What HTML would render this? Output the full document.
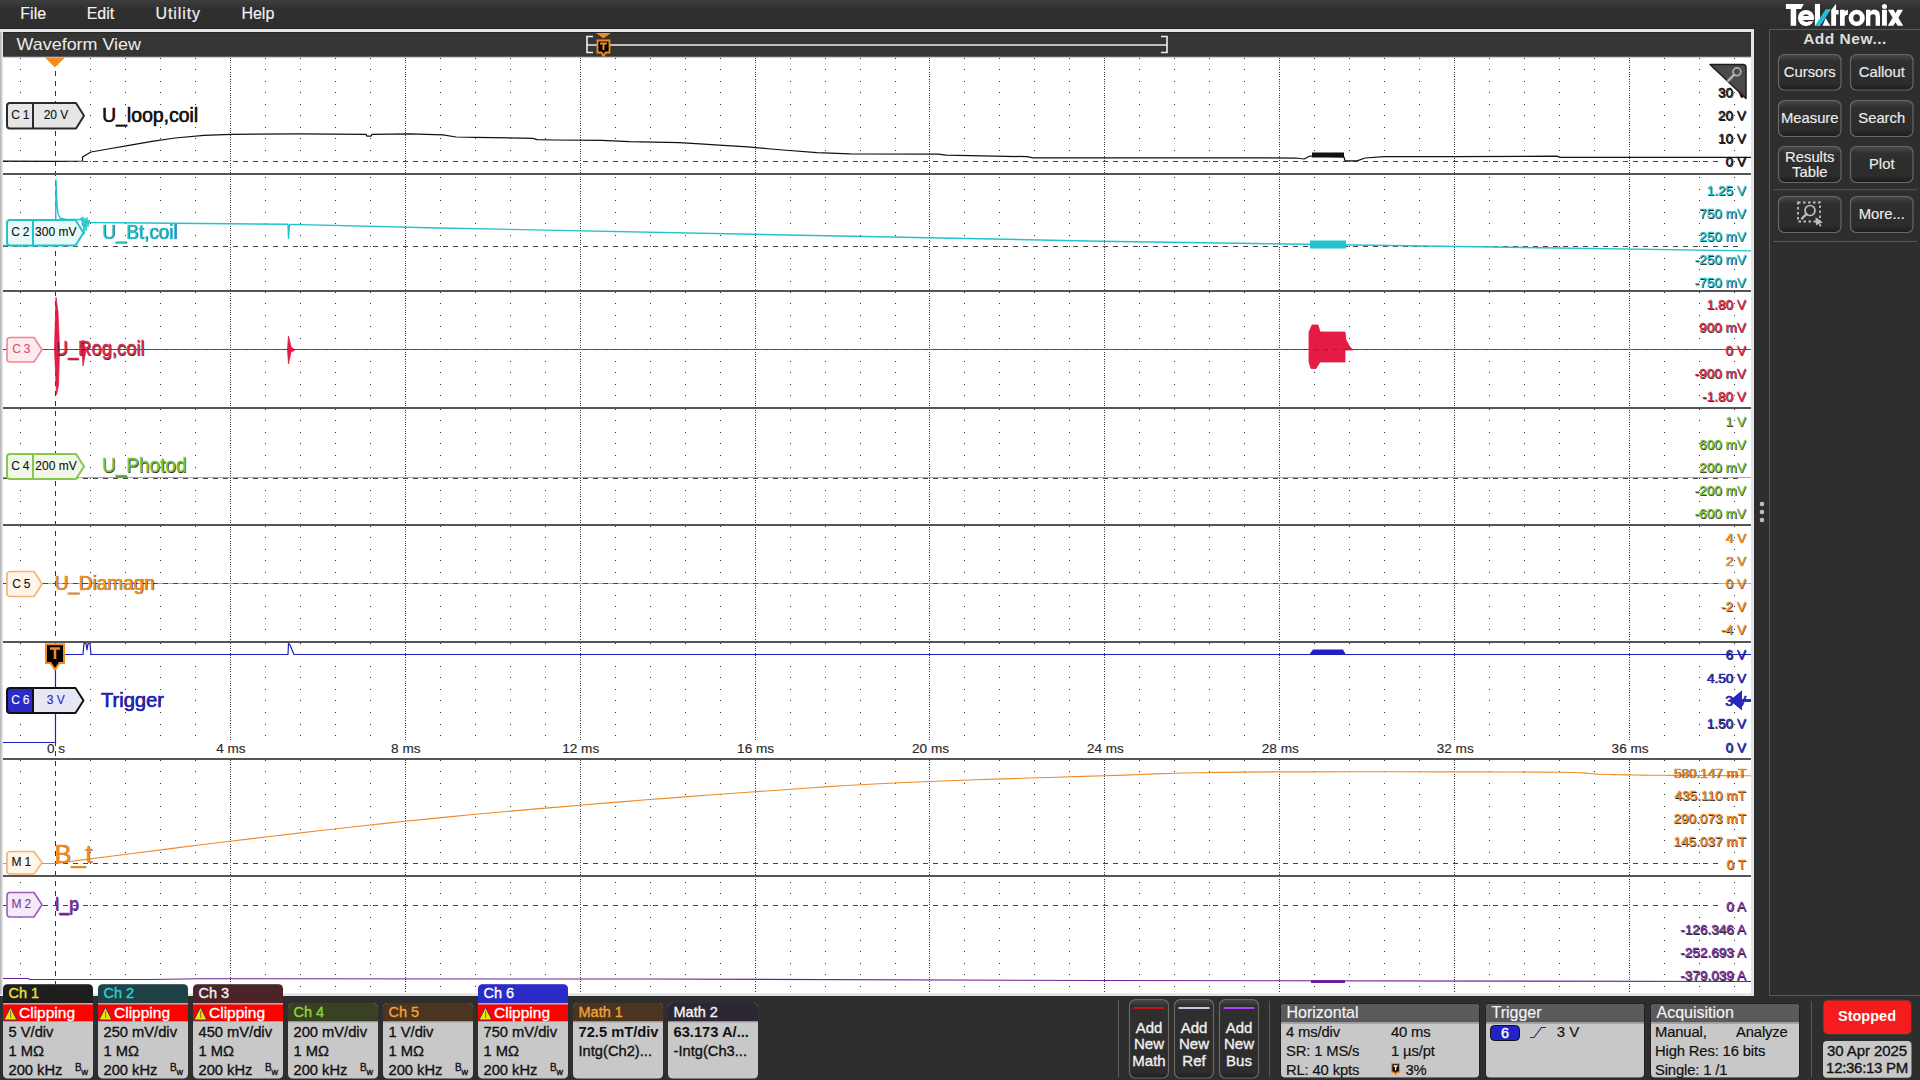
<!DOCTYPE html>
<html><head><meta charset="utf-8"><title>Tektronix Waveform View</title>
<style>html,body{margin:0;padding:0;background:#2e2e2e;width:1920px;height:1080px;overflow:hidden}svg{display:block}text{font-family:"Liberation Sans",sans-serif}</style>
</head><body>
<svg width="1920" height="1080" viewBox="0 0 1920 1080">
<defs>
<linearGradient id="gmenu" x1="0" y1="0" x2="0" y2="29" gradientUnits="userSpaceOnUse"><stop offset="0" stop-color="#3e3e3e"/><stop offset="0.33" stop-color="#2f2f2f"/><stop offset="1" stop-color="#2e2e2e"/></linearGradient>
<linearGradient id="gbtn" x1="0" y1="0" x2="0" y2="1"><stop offset="0" stop-color="#484a4b"/><stop offset="0.2" stop-color="#2f2f2f"/><stop offset="0.82" stop-color="#2c2c2c"/><stop offset="1" stop-color="#1c1c1c"/></linearGradient>
<linearGradient id="gbtn2" x1="0" y1="0" x2="0" y2="1"><stop offset="0" stop-color="#484a4b"/><stop offset="0.08" stop-color="#2f2f2f"/><stop offset="0.93" stop-color="#2c2c2c"/><stop offset="1" stop-color="#1c1c1c"/></linearGradient>
</defs>
<rect x="0" y="0" width="1920" height="1080" fill="#2e2e2e"/>
<rect x="0" y="0" width="1920" height="29" fill="url(#gmenu)"/>
<rect x="0" y="28" width="1754" height="1" fill="#262626"/>
<text x="20.3" y="19" font-size="16" fill="#f2f2f2" stroke="#f2f2f2" stroke-width="0.15" >File</text>
<text x="86.7" y="19" font-size="16" fill="#f2f2f2" stroke="#f2f2f2" stroke-width="0.15" >Edit</text>
<text x="241.4" y="19" font-size="16" fill="#f2f2f2" stroke="#f2f2f2" stroke-width="0.15" >Help</text>
<text x="155.5" y="19" font-size="16" fill="#f2f2f2" stroke="#f2f2f2" stroke-width="0.15" textLength="44.5" lengthAdjust="spacing">Utility</text>
<path d="M1785.9 4.05H1803.8L1801 9H1796.2V25.7H1790.7V9H1785.9Z" fill="#ffffff"/>
<path d="M1814.9 3.9H1820V25.7H1814.9Z" fill="#ffffff"/>
<path d="M1822.6 25.7H1830.3L1825.6 17.9Z" fill="#ffffff"/>
<path d="M1831.2 25.7V9.9L1835.6 4.2H1836.1V9.9H1838.6V14.5H1836.1V25.7Z" fill="#ffffff"/>
<path d="M1840 25.7V9.8H1844.7V11.4Q1845.9 9.8 1847.9 9.8V14.7Q1844.7 14.7 1844.7 17.6V25.7Z" fill="#ffffff"/>
<path d="M1866 25.7V9.8H1870.4V11.4Q1872 9.6 1874.3 9.6Q1880 9.8 1880 16.2V25.7H1875.6V16.6Q1875.6 14.3 1873 14.3Q1870.4 14.3 1870.4 16.6V25.7Z" fill="#ffffff"/>
<path d="M1882 9.8H1886.9V25.7H1882Z" fill="#ffffff"/>
<path d="M1888 9.8H1893.6L1895.5 13.2L1897.4 9.8H1903L1898.4 17.8L1903.2 25.7H1897.6L1895.5 22.3L1893.4 25.7H1887.8L1892.6 17.8Z" fill="#ffffff"/>
<circle cx="1806" cy="18" r="8.1" fill="#ffffff"/>
<path d="M1802.8 15.9Q1806 12.6 1809.2 15.9Z" fill="#2e2e2e"/>
<path d="M1802.8 20.1H1814.5V21.3H1808.8Q1806 23.4 1802.8 20.1Z" fill="#2e2e2e"/>
<circle cx="1856.7" cy="17.9" r="8.1" fill="#ffffff"/>
<ellipse cx="1856.6" cy="17.9" rx="3.3" ry="3.7" fill="#2e2e2e"/>
<circle cx="1884.45" cy="6.45" r="2.5" fill="#ffffff"/>
<path d="M1814.9 25.7H1820.1L1831 9.2H1825.7Z" fill="#1dc0e2"/>
<rect x="0" y="29" width="1754" height="967" fill="#e4e4e6"/><rect x="0" y="32" width="1.5" height="962" fill="#b8b9bb"/>
<rect x="3" y="32" width="1748" height="24" fill="#353533"/><rect x="3" y="32" width="1748" height="1" fill="#262626"/>
<rect x="3" y="56" width="1748" height="1.5" fill="#5a5d61"/>
<rect x="3" y="57.5" width="1748" height="935.8" fill="#ffffff"/>
<text x="16.5" y="50" font-size="17" fill="#ececec" textLength="124.5" lengthAdjust="spacingAndGlyphs">Waveform View</text>
<rect x="587" y="44" width="580" height="2" fill="#bdbdbd"/>
<path d="M593 36.5H587V52.5H593" fill="none" stroke="#f0f0f0" stroke-width="1.6"/>
<path d="M1161 36.5H1167V52.5H1161" fill="none" stroke="#f0f0f0" stroke-width="1.6"/>
<polygon points="595.8,33 611,33 603.4,38.3" fill="#f58a1f"/>
<path d="M597.5 40.5H609.5V52.5H605.5L603.5 56L601.5 52.5H597.5Z" fill="#000" stroke="#f58a1f" stroke-width="1.8"/>
<path d="M600 43.5H607M603.5 43.5V50" stroke="#f58a1f" stroke-width="2"/>
<path d="M20 58h1v1h-1zM90 58h1v1h-1zM125 58h1v1h-1zM160 58h1v1h-1zM195 58h1v1h-1zM265 58h1v1h-1zM300 58h1v1h-1zM335 58h1v1h-1zM370 58h1v1h-1zM440 58h1v1h-1zM475 58h1v1h-1zM510 58h1v1h-1zM545 58h1v1h-1zM615 58h1v1h-1zM650 58h1v1h-1zM685 58h1v1h-1zM720 58h1v1h-1zM790 58h1v1h-1zM825 58h1v1h-1zM860 58h1v1h-1zM895 58h1v1h-1zM964 58h1v1h-1zM999 58h1v1h-1zM1034 58h1v1h-1zM1069 58h1v1h-1zM1139 58h1v1h-1zM1174 58h1v1h-1zM1209 58h1v1h-1zM1244 58h1v1h-1zM1314 58h1v1h-1zM1349 58h1v1h-1zM1384 58h1v1h-1zM1419 58h1v1h-1zM1489 58h1v1h-1zM1524 58h1v1h-1zM1559 58h1v1h-1zM1594 58h1v1h-1zM1664 58h1v1h-1zM1699 58h1v1h-1zM1734 58h1v1h-1zM20 69h1v1h-1zM90 69h1v1h-1zM125 69h1v1h-1zM160 69h1v1h-1zM195 69h1v1h-1zM265 69h1v1h-1zM300 69h1v1h-1zM335 69h1v1h-1zM370 69h1v1h-1zM440 69h1v1h-1zM475 69h1v1h-1zM510 69h1v1h-1zM545 69h1v1h-1zM615 69h1v1h-1zM650 69h1v1h-1zM685 69h1v1h-1zM720 69h1v1h-1zM790 69h1v1h-1zM825 69h1v1h-1zM860 69h1v1h-1zM895 69h1v1h-1zM964 69h1v1h-1zM999 69h1v1h-1zM1034 69h1v1h-1zM1069 69h1v1h-1zM1139 69h1v1h-1zM1174 69h1v1h-1zM1209 69h1v1h-1zM1244 69h1v1h-1zM1314 69h1v1h-1zM1349 69h1v1h-1zM1384 69h1v1h-1zM1419 69h1v1h-1zM1489 69h1v1h-1zM1524 69h1v1h-1zM1559 69h1v1h-1zM1594 69h1v1h-1zM1664 69h1v1h-1zM1699 69h1v1h-1zM1734 69h1v1h-1zM20 81h1v1h-1zM90 81h1v1h-1zM125 81h1v1h-1zM160 81h1v1h-1zM195 81h1v1h-1zM265 81h1v1h-1zM300 81h1v1h-1zM335 81h1v1h-1zM370 81h1v1h-1zM440 81h1v1h-1zM475 81h1v1h-1zM510 81h1v1h-1zM545 81h1v1h-1zM615 81h1v1h-1zM650 81h1v1h-1zM685 81h1v1h-1zM720 81h1v1h-1zM790 81h1v1h-1zM825 81h1v1h-1zM860 81h1v1h-1zM895 81h1v1h-1zM964 81h1v1h-1zM999 81h1v1h-1zM1034 81h1v1h-1zM1069 81h1v1h-1zM1139 81h1v1h-1zM1174 81h1v1h-1zM1209 81h1v1h-1zM1244 81h1v1h-1zM1314 81h1v1h-1zM1349 81h1v1h-1zM1384 81h1v1h-1zM1419 81h1v1h-1zM1489 81h1v1h-1zM1524 81h1v1h-1zM1559 81h1v1h-1zM1594 81h1v1h-1zM1664 81h1v1h-1zM1699 81h1v1h-1zM1734 81h1v1h-1zM20 92h1v1h-1zM90 92h1v1h-1zM125 92h1v1h-1zM160 92h1v1h-1zM195 92h1v1h-1zM265 92h1v1h-1zM300 92h1v1h-1zM335 92h1v1h-1zM370 92h1v1h-1zM440 92h1v1h-1zM475 92h1v1h-1zM510 92h1v1h-1zM545 92h1v1h-1zM615 92h1v1h-1zM650 92h1v1h-1zM685 92h1v1h-1zM720 92h1v1h-1zM790 92h1v1h-1zM825 92h1v1h-1zM860 92h1v1h-1zM895 92h1v1h-1zM964 92h1v1h-1zM999 92h1v1h-1zM1034 92h1v1h-1zM1069 92h1v1h-1zM1139 92h1v1h-1zM1174 92h1v1h-1zM1209 92h1v1h-1zM1244 92h1v1h-1zM1314 92h1v1h-1zM1349 92h1v1h-1zM1384 92h1v1h-1zM1419 92h1v1h-1zM1489 92h1v1h-1zM1524 92h1v1h-1zM1559 92h1v1h-1zM1594 92h1v1h-1zM1664 92h1v1h-1zM1699 92h1v1h-1zM1734 92h1v1h-1zM20 104h1v1h-1zM90 104h1v1h-1zM125 104h1v1h-1zM160 104h1v1h-1zM195 104h1v1h-1zM265 104h1v1h-1zM300 104h1v1h-1zM335 104h1v1h-1zM370 104h1v1h-1zM440 104h1v1h-1zM475 104h1v1h-1zM510 104h1v1h-1zM545 104h1v1h-1zM615 104h1v1h-1zM650 104h1v1h-1zM685 104h1v1h-1zM720 104h1v1h-1zM790 104h1v1h-1zM825 104h1v1h-1zM860 104h1v1h-1zM895 104h1v1h-1zM964 104h1v1h-1zM999 104h1v1h-1zM1034 104h1v1h-1zM1069 104h1v1h-1zM1139 104h1v1h-1zM1174 104h1v1h-1zM1209 104h1v1h-1zM1244 104h1v1h-1zM1314 104h1v1h-1zM1349 104h1v1h-1zM1384 104h1v1h-1zM1419 104h1v1h-1zM1489 104h1v1h-1zM1524 104h1v1h-1zM1559 104h1v1h-1zM1594 104h1v1h-1zM1664 104h1v1h-1zM1699 104h1v1h-1zM1734 104h1v1h-1zM20 115h1v1h-1zM90 115h1v1h-1zM125 115h1v1h-1zM160 115h1v1h-1zM195 115h1v1h-1zM265 115h1v1h-1zM300 115h1v1h-1zM335 115h1v1h-1zM370 115h1v1h-1zM440 115h1v1h-1zM475 115h1v1h-1zM510 115h1v1h-1zM545 115h1v1h-1zM615 115h1v1h-1zM650 115h1v1h-1zM685 115h1v1h-1zM720 115h1v1h-1zM790 115h1v1h-1zM825 115h1v1h-1zM860 115h1v1h-1zM895 115h1v1h-1zM964 115h1v1h-1zM999 115h1v1h-1zM1034 115h1v1h-1zM1069 115h1v1h-1zM1139 115h1v1h-1zM1174 115h1v1h-1zM1209 115h1v1h-1zM1244 115h1v1h-1zM1314 115h1v1h-1zM1349 115h1v1h-1zM1384 115h1v1h-1zM1419 115h1v1h-1zM1489 115h1v1h-1zM1524 115h1v1h-1zM1559 115h1v1h-1zM1594 115h1v1h-1zM1664 115h1v1h-1zM1699 115h1v1h-1zM1734 115h1v1h-1zM20 127h1v1h-1zM90 127h1v1h-1zM125 127h1v1h-1zM160 127h1v1h-1zM195 127h1v1h-1zM265 127h1v1h-1zM300 127h1v1h-1zM335 127h1v1h-1zM370 127h1v1h-1zM440 127h1v1h-1zM475 127h1v1h-1zM510 127h1v1h-1zM545 127h1v1h-1zM615 127h1v1h-1zM650 127h1v1h-1zM685 127h1v1h-1zM720 127h1v1h-1zM790 127h1v1h-1zM825 127h1v1h-1zM860 127h1v1h-1zM895 127h1v1h-1zM964 127h1v1h-1zM999 127h1v1h-1zM1034 127h1v1h-1zM1069 127h1v1h-1zM1139 127h1v1h-1zM1174 127h1v1h-1zM1209 127h1v1h-1zM1244 127h1v1h-1zM1314 127h1v1h-1zM1349 127h1v1h-1zM1384 127h1v1h-1zM1419 127h1v1h-1zM1489 127h1v1h-1zM1524 127h1v1h-1zM1559 127h1v1h-1zM1594 127h1v1h-1zM1664 127h1v1h-1zM1699 127h1v1h-1zM1734 127h1v1h-1zM20 138h1v1h-1zM90 138h1v1h-1zM125 138h1v1h-1zM160 138h1v1h-1zM195 138h1v1h-1zM265 138h1v1h-1zM300 138h1v1h-1zM335 138h1v1h-1zM370 138h1v1h-1zM440 138h1v1h-1zM475 138h1v1h-1zM510 138h1v1h-1zM545 138h1v1h-1zM615 138h1v1h-1zM650 138h1v1h-1zM685 138h1v1h-1zM720 138h1v1h-1zM790 138h1v1h-1zM825 138h1v1h-1zM860 138h1v1h-1zM895 138h1v1h-1zM964 138h1v1h-1zM999 138h1v1h-1zM1034 138h1v1h-1zM1069 138h1v1h-1zM1139 138h1v1h-1zM1174 138h1v1h-1zM1209 138h1v1h-1zM1244 138h1v1h-1zM1314 138h1v1h-1zM1349 138h1v1h-1zM1384 138h1v1h-1zM1419 138h1v1h-1zM1489 138h1v1h-1zM1524 138h1v1h-1zM1559 138h1v1h-1zM1594 138h1v1h-1zM1664 138h1v1h-1zM1699 138h1v1h-1zM1734 138h1v1h-1zM20 150h1v1h-1zM90 150h1v1h-1zM125 150h1v1h-1zM160 150h1v1h-1zM195 150h1v1h-1zM265 150h1v1h-1zM300 150h1v1h-1zM335 150h1v1h-1zM370 150h1v1h-1zM440 150h1v1h-1zM475 150h1v1h-1zM510 150h1v1h-1zM545 150h1v1h-1zM615 150h1v1h-1zM650 150h1v1h-1zM685 150h1v1h-1zM720 150h1v1h-1zM790 150h1v1h-1zM825 150h1v1h-1zM860 150h1v1h-1zM895 150h1v1h-1zM964 150h1v1h-1zM999 150h1v1h-1zM1034 150h1v1h-1zM1069 150h1v1h-1zM1139 150h1v1h-1zM1174 150h1v1h-1zM1209 150h1v1h-1zM1244 150h1v1h-1zM1314 150h1v1h-1zM1349 150h1v1h-1zM1384 150h1v1h-1zM1419 150h1v1h-1zM1489 150h1v1h-1zM1524 150h1v1h-1zM1559 150h1v1h-1zM1594 150h1v1h-1zM1664 150h1v1h-1zM1699 150h1v1h-1zM1734 150h1v1h-1zM20 161h1v1h-1zM90 161h1v1h-1zM125 161h1v1h-1zM160 161h1v1h-1zM195 161h1v1h-1zM265 161h1v1h-1zM300 161h1v1h-1zM335 161h1v1h-1zM370 161h1v1h-1zM440 161h1v1h-1zM475 161h1v1h-1zM510 161h1v1h-1zM545 161h1v1h-1zM615 161h1v1h-1zM650 161h1v1h-1zM685 161h1v1h-1zM720 161h1v1h-1zM790 161h1v1h-1zM825 161h1v1h-1zM860 161h1v1h-1zM895 161h1v1h-1zM964 161h1v1h-1zM999 161h1v1h-1zM1034 161h1v1h-1zM1069 161h1v1h-1zM1139 161h1v1h-1zM1174 161h1v1h-1zM1209 161h1v1h-1zM1244 161h1v1h-1zM1314 161h1v1h-1zM1349 161h1v1h-1zM1384 161h1v1h-1zM1419 161h1v1h-1zM1489 161h1v1h-1zM1524 161h1v1h-1zM1559 161h1v1h-1zM1594 161h1v1h-1zM1664 161h1v1h-1zM1699 161h1v1h-1zM1734 161h1v1h-1zM20 177h1v1h-1zM90 177h1v1h-1zM125 177h1v1h-1zM160 177h1v1h-1zM195 177h1v1h-1zM265 177h1v1h-1zM300 177h1v1h-1zM335 177h1v1h-1zM370 177h1v1h-1zM440 177h1v1h-1zM475 177h1v1h-1zM510 177h1v1h-1zM545 177h1v1h-1zM615 177h1v1h-1zM650 177h1v1h-1zM685 177h1v1h-1zM720 177h1v1h-1zM790 177h1v1h-1zM825 177h1v1h-1zM860 177h1v1h-1zM895 177h1v1h-1zM964 177h1v1h-1zM999 177h1v1h-1zM1034 177h1v1h-1zM1069 177h1v1h-1zM1139 177h1v1h-1zM1174 177h1v1h-1zM1209 177h1v1h-1zM1244 177h1v1h-1zM1314 177h1v1h-1zM1349 177h1v1h-1zM1384 177h1v1h-1zM1419 177h1v1h-1zM1489 177h1v1h-1zM1524 177h1v1h-1zM1559 177h1v1h-1zM1594 177h1v1h-1zM1664 177h1v1h-1zM1699 177h1v1h-1zM1734 177h1v1h-1zM20 189h1v1h-1zM90 189h1v1h-1zM125 189h1v1h-1zM160 189h1v1h-1zM195 189h1v1h-1zM265 189h1v1h-1zM300 189h1v1h-1zM335 189h1v1h-1zM370 189h1v1h-1zM440 189h1v1h-1zM475 189h1v1h-1zM510 189h1v1h-1zM545 189h1v1h-1zM615 189h1v1h-1zM650 189h1v1h-1zM685 189h1v1h-1zM720 189h1v1h-1zM790 189h1v1h-1zM825 189h1v1h-1zM860 189h1v1h-1zM895 189h1v1h-1zM964 189h1v1h-1zM999 189h1v1h-1zM1034 189h1v1h-1zM1069 189h1v1h-1zM1139 189h1v1h-1zM1174 189h1v1h-1zM1209 189h1v1h-1zM1244 189h1v1h-1zM1314 189h1v1h-1zM1349 189h1v1h-1zM1384 189h1v1h-1zM1419 189h1v1h-1zM1489 189h1v1h-1zM1524 189h1v1h-1zM1559 189h1v1h-1zM1594 189h1v1h-1zM1664 189h1v1h-1zM1699 189h1v1h-1zM1734 189h1v1h-1zM20 200h1v1h-1zM90 200h1v1h-1zM125 200h1v1h-1zM160 200h1v1h-1zM195 200h1v1h-1zM265 200h1v1h-1zM300 200h1v1h-1zM335 200h1v1h-1zM370 200h1v1h-1zM440 200h1v1h-1zM475 200h1v1h-1zM510 200h1v1h-1zM545 200h1v1h-1zM615 200h1v1h-1zM650 200h1v1h-1zM685 200h1v1h-1zM720 200h1v1h-1zM790 200h1v1h-1zM825 200h1v1h-1zM860 200h1v1h-1zM895 200h1v1h-1zM964 200h1v1h-1zM999 200h1v1h-1zM1034 200h1v1h-1zM1069 200h1v1h-1zM1139 200h1v1h-1zM1174 200h1v1h-1zM1209 200h1v1h-1zM1244 200h1v1h-1zM1314 200h1v1h-1zM1349 200h1v1h-1zM1384 200h1v1h-1zM1419 200h1v1h-1zM1489 200h1v1h-1zM1524 200h1v1h-1zM1559 200h1v1h-1zM1594 200h1v1h-1zM1664 200h1v1h-1zM1699 200h1v1h-1zM1734 200h1v1h-1zM20 212h1v1h-1zM90 212h1v1h-1zM125 212h1v1h-1zM160 212h1v1h-1zM195 212h1v1h-1zM265 212h1v1h-1zM300 212h1v1h-1zM335 212h1v1h-1zM370 212h1v1h-1zM440 212h1v1h-1zM475 212h1v1h-1zM510 212h1v1h-1zM545 212h1v1h-1zM615 212h1v1h-1zM650 212h1v1h-1zM685 212h1v1h-1zM720 212h1v1h-1zM790 212h1v1h-1zM825 212h1v1h-1zM860 212h1v1h-1zM895 212h1v1h-1zM964 212h1v1h-1zM999 212h1v1h-1zM1034 212h1v1h-1zM1069 212h1v1h-1zM1139 212h1v1h-1zM1174 212h1v1h-1zM1209 212h1v1h-1zM1244 212h1v1h-1zM1314 212h1v1h-1zM1349 212h1v1h-1zM1384 212h1v1h-1zM1419 212h1v1h-1zM1489 212h1v1h-1zM1524 212h1v1h-1zM1559 212h1v1h-1zM1594 212h1v1h-1zM1664 212h1v1h-1zM1699 212h1v1h-1zM1734 212h1v1h-1zM20 223h1v1h-1zM90 223h1v1h-1zM125 223h1v1h-1zM160 223h1v1h-1zM195 223h1v1h-1zM265 223h1v1h-1zM300 223h1v1h-1zM335 223h1v1h-1zM370 223h1v1h-1zM440 223h1v1h-1zM475 223h1v1h-1zM510 223h1v1h-1zM545 223h1v1h-1zM615 223h1v1h-1zM650 223h1v1h-1zM685 223h1v1h-1zM720 223h1v1h-1zM790 223h1v1h-1zM825 223h1v1h-1zM860 223h1v1h-1zM895 223h1v1h-1zM964 223h1v1h-1zM999 223h1v1h-1zM1034 223h1v1h-1zM1069 223h1v1h-1zM1139 223h1v1h-1zM1174 223h1v1h-1zM1209 223h1v1h-1zM1244 223h1v1h-1zM1314 223h1v1h-1zM1349 223h1v1h-1zM1384 223h1v1h-1zM1419 223h1v1h-1zM1489 223h1v1h-1zM1524 223h1v1h-1zM1559 223h1v1h-1zM1594 223h1v1h-1zM1664 223h1v1h-1zM1699 223h1v1h-1zM1734 223h1v1h-1zM20 235h1v1h-1zM90 235h1v1h-1zM125 235h1v1h-1zM160 235h1v1h-1zM195 235h1v1h-1zM265 235h1v1h-1zM300 235h1v1h-1zM335 235h1v1h-1zM370 235h1v1h-1zM440 235h1v1h-1zM475 235h1v1h-1zM510 235h1v1h-1zM545 235h1v1h-1zM615 235h1v1h-1zM650 235h1v1h-1zM685 235h1v1h-1zM720 235h1v1h-1zM790 235h1v1h-1zM825 235h1v1h-1zM860 235h1v1h-1zM895 235h1v1h-1zM964 235h1v1h-1zM999 235h1v1h-1zM1034 235h1v1h-1zM1069 235h1v1h-1zM1139 235h1v1h-1zM1174 235h1v1h-1zM1209 235h1v1h-1zM1244 235h1v1h-1zM1314 235h1v1h-1zM1349 235h1v1h-1zM1384 235h1v1h-1zM1419 235h1v1h-1zM1489 235h1v1h-1zM1524 235h1v1h-1zM1559 235h1v1h-1zM1594 235h1v1h-1zM1664 235h1v1h-1zM1699 235h1v1h-1zM1734 235h1v1h-1zM20 246h1v1h-1zM90 246h1v1h-1zM125 246h1v1h-1zM160 246h1v1h-1zM195 246h1v1h-1zM265 246h1v1h-1zM300 246h1v1h-1zM335 246h1v1h-1zM370 246h1v1h-1zM440 246h1v1h-1zM475 246h1v1h-1zM510 246h1v1h-1zM545 246h1v1h-1zM615 246h1v1h-1zM650 246h1v1h-1zM685 246h1v1h-1zM720 246h1v1h-1zM790 246h1v1h-1zM825 246h1v1h-1zM860 246h1v1h-1zM895 246h1v1h-1zM964 246h1v1h-1zM999 246h1v1h-1zM1034 246h1v1h-1zM1069 246h1v1h-1zM1139 246h1v1h-1zM1174 246h1v1h-1zM1209 246h1v1h-1zM1244 246h1v1h-1zM1314 246h1v1h-1zM1349 246h1v1h-1zM1384 246h1v1h-1zM1419 246h1v1h-1zM1489 246h1v1h-1zM1524 246h1v1h-1zM1559 246h1v1h-1zM1594 246h1v1h-1zM1664 246h1v1h-1zM1699 246h1v1h-1zM1734 246h1v1h-1zM20 258h1v1h-1zM90 258h1v1h-1zM125 258h1v1h-1zM160 258h1v1h-1zM195 258h1v1h-1zM265 258h1v1h-1zM300 258h1v1h-1zM335 258h1v1h-1zM370 258h1v1h-1zM440 258h1v1h-1zM475 258h1v1h-1zM510 258h1v1h-1zM545 258h1v1h-1zM615 258h1v1h-1zM650 258h1v1h-1zM685 258h1v1h-1zM720 258h1v1h-1zM790 258h1v1h-1zM825 258h1v1h-1zM860 258h1v1h-1zM895 258h1v1h-1zM964 258h1v1h-1zM999 258h1v1h-1zM1034 258h1v1h-1zM1069 258h1v1h-1zM1139 258h1v1h-1zM1174 258h1v1h-1zM1209 258h1v1h-1zM1244 258h1v1h-1zM1314 258h1v1h-1zM1349 258h1v1h-1zM1384 258h1v1h-1zM1419 258h1v1h-1zM1489 258h1v1h-1zM1524 258h1v1h-1zM1559 258h1v1h-1zM1594 258h1v1h-1zM1664 258h1v1h-1zM1699 258h1v1h-1zM1734 258h1v1h-1zM20 269h1v1h-1zM90 269h1v1h-1zM125 269h1v1h-1zM160 269h1v1h-1zM195 269h1v1h-1zM265 269h1v1h-1zM300 269h1v1h-1zM335 269h1v1h-1zM370 269h1v1h-1zM440 269h1v1h-1zM475 269h1v1h-1zM510 269h1v1h-1zM545 269h1v1h-1zM615 269h1v1h-1zM650 269h1v1h-1zM685 269h1v1h-1zM720 269h1v1h-1zM790 269h1v1h-1zM825 269h1v1h-1zM860 269h1v1h-1zM895 269h1v1h-1zM964 269h1v1h-1zM999 269h1v1h-1zM1034 269h1v1h-1zM1069 269h1v1h-1zM1139 269h1v1h-1zM1174 269h1v1h-1zM1209 269h1v1h-1zM1244 269h1v1h-1zM1314 269h1v1h-1zM1349 269h1v1h-1zM1384 269h1v1h-1zM1419 269h1v1h-1zM1489 269h1v1h-1zM1524 269h1v1h-1zM1559 269h1v1h-1zM1594 269h1v1h-1zM1664 269h1v1h-1zM1699 269h1v1h-1zM1734 269h1v1h-1zM20 281h1v1h-1zM90 281h1v1h-1zM125 281h1v1h-1zM160 281h1v1h-1zM195 281h1v1h-1zM265 281h1v1h-1zM300 281h1v1h-1zM335 281h1v1h-1zM370 281h1v1h-1zM440 281h1v1h-1zM475 281h1v1h-1zM510 281h1v1h-1zM545 281h1v1h-1zM615 281h1v1h-1zM650 281h1v1h-1zM685 281h1v1h-1zM720 281h1v1h-1zM790 281h1v1h-1zM825 281h1v1h-1zM860 281h1v1h-1zM895 281h1v1h-1zM964 281h1v1h-1zM999 281h1v1h-1zM1034 281h1v1h-1zM1069 281h1v1h-1zM1139 281h1v1h-1zM1174 281h1v1h-1zM1209 281h1v1h-1zM1244 281h1v1h-1zM1314 281h1v1h-1zM1349 281h1v1h-1zM1384 281h1v1h-1zM1419 281h1v1h-1zM1489 281h1v1h-1zM1524 281h1v1h-1zM1559 281h1v1h-1zM1594 281h1v1h-1zM1664 281h1v1h-1zM1699 281h1v1h-1zM1734 281h1v1h-1zM20 292h1v1h-1zM90 292h1v1h-1zM125 292h1v1h-1zM160 292h1v1h-1zM195 292h1v1h-1zM265 292h1v1h-1zM300 292h1v1h-1zM335 292h1v1h-1zM370 292h1v1h-1zM440 292h1v1h-1zM475 292h1v1h-1zM510 292h1v1h-1zM545 292h1v1h-1zM615 292h1v1h-1zM650 292h1v1h-1zM685 292h1v1h-1zM720 292h1v1h-1zM790 292h1v1h-1zM825 292h1v1h-1zM860 292h1v1h-1zM895 292h1v1h-1zM964 292h1v1h-1zM999 292h1v1h-1zM1034 292h1v1h-1zM1069 292h1v1h-1zM1139 292h1v1h-1zM1174 292h1v1h-1zM1209 292h1v1h-1zM1244 292h1v1h-1zM1314 292h1v1h-1zM1349 292h1v1h-1zM1384 292h1v1h-1zM1419 292h1v1h-1zM1489 292h1v1h-1zM1524 292h1v1h-1zM1559 292h1v1h-1zM1594 292h1v1h-1zM1664 292h1v1h-1zM1699 292h1v1h-1zM1734 292h1v1h-1zM20 303h1v1h-1zM90 303h1v1h-1zM125 303h1v1h-1zM160 303h1v1h-1zM195 303h1v1h-1zM265 303h1v1h-1zM300 303h1v1h-1zM335 303h1v1h-1zM370 303h1v1h-1zM440 303h1v1h-1zM475 303h1v1h-1zM510 303h1v1h-1zM545 303h1v1h-1zM615 303h1v1h-1zM650 303h1v1h-1zM685 303h1v1h-1zM720 303h1v1h-1zM790 303h1v1h-1zM825 303h1v1h-1zM860 303h1v1h-1zM895 303h1v1h-1zM964 303h1v1h-1zM999 303h1v1h-1zM1034 303h1v1h-1zM1069 303h1v1h-1zM1139 303h1v1h-1zM1174 303h1v1h-1zM1209 303h1v1h-1zM1244 303h1v1h-1zM1314 303h1v1h-1zM1349 303h1v1h-1zM1384 303h1v1h-1zM1419 303h1v1h-1zM1489 303h1v1h-1zM1524 303h1v1h-1zM1559 303h1v1h-1zM1594 303h1v1h-1zM1664 303h1v1h-1zM1699 303h1v1h-1zM1734 303h1v1h-1zM20 315h1v1h-1zM90 315h1v1h-1zM125 315h1v1h-1zM160 315h1v1h-1zM195 315h1v1h-1zM265 315h1v1h-1zM300 315h1v1h-1zM335 315h1v1h-1zM370 315h1v1h-1zM440 315h1v1h-1zM475 315h1v1h-1zM510 315h1v1h-1zM545 315h1v1h-1zM615 315h1v1h-1zM650 315h1v1h-1zM685 315h1v1h-1zM720 315h1v1h-1zM790 315h1v1h-1zM825 315h1v1h-1zM860 315h1v1h-1zM895 315h1v1h-1zM964 315h1v1h-1zM999 315h1v1h-1zM1034 315h1v1h-1zM1069 315h1v1h-1zM1139 315h1v1h-1zM1174 315h1v1h-1zM1209 315h1v1h-1zM1244 315h1v1h-1zM1314 315h1v1h-1zM1349 315h1v1h-1zM1384 315h1v1h-1zM1419 315h1v1h-1zM1489 315h1v1h-1zM1524 315h1v1h-1zM1559 315h1v1h-1zM1594 315h1v1h-1zM1664 315h1v1h-1zM1699 315h1v1h-1zM1734 315h1v1h-1zM20 326h1v1h-1zM90 326h1v1h-1zM125 326h1v1h-1zM160 326h1v1h-1zM195 326h1v1h-1zM265 326h1v1h-1zM300 326h1v1h-1zM335 326h1v1h-1zM370 326h1v1h-1zM440 326h1v1h-1zM475 326h1v1h-1zM510 326h1v1h-1zM545 326h1v1h-1zM615 326h1v1h-1zM650 326h1v1h-1zM685 326h1v1h-1zM720 326h1v1h-1zM790 326h1v1h-1zM825 326h1v1h-1zM860 326h1v1h-1zM895 326h1v1h-1zM964 326h1v1h-1zM999 326h1v1h-1zM1034 326h1v1h-1zM1069 326h1v1h-1zM1139 326h1v1h-1zM1174 326h1v1h-1zM1209 326h1v1h-1zM1244 326h1v1h-1zM1314 326h1v1h-1zM1349 326h1v1h-1zM1384 326h1v1h-1zM1419 326h1v1h-1zM1489 326h1v1h-1zM1524 326h1v1h-1zM1559 326h1v1h-1zM1594 326h1v1h-1zM1664 326h1v1h-1zM1699 326h1v1h-1zM1734 326h1v1h-1zM20 338h1v1h-1zM90 338h1v1h-1zM125 338h1v1h-1zM160 338h1v1h-1zM195 338h1v1h-1zM265 338h1v1h-1zM300 338h1v1h-1zM335 338h1v1h-1zM370 338h1v1h-1zM440 338h1v1h-1zM475 338h1v1h-1zM510 338h1v1h-1zM545 338h1v1h-1zM615 338h1v1h-1zM650 338h1v1h-1zM685 338h1v1h-1zM720 338h1v1h-1zM790 338h1v1h-1zM825 338h1v1h-1zM860 338h1v1h-1zM895 338h1v1h-1zM964 338h1v1h-1zM999 338h1v1h-1zM1034 338h1v1h-1zM1069 338h1v1h-1zM1139 338h1v1h-1zM1174 338h1v1h-1zM1209 338h1v1h-1zM1244 338h1v1h-1zM1314 338h1v1h-1zM1349 338h1v1h-1zM1384 338h1v1h-1zM1419 338h1v1h-1zM1489 338h1v1h-1zM1524 338h1v1h-1zM1559 338h1v1h-1zM1594 338h1v1h-1zM1664 338h1v1h-1zM1699 338h1v1h-1zM1734 338h1v1h-1zM20 349h1v1h-1zM90 349h1v1h-1zM125 349h1v1h-1zM160 349h1v1h-1zM195 349h1v1h-1zM265 349h1v1h-1zM300 349h1v1h-1zM335 349h1v1h-1zM370 349h1v1h-1zM440 349h1v1h-1zM475 349h1v1h-1zM510 349h1v1h-1zM545 349h1v1h-1zM615 349h1v1h-1zM650 349h1v1h-1zM685 349h1v1h-1zM720 349h1v1h-1zM790 349h1v1h-1zM825 349h1v1h-1zM860 349h1v1h-1zM895 349h1v1h-1zM964 349h1v1h-1zM999 349h1v1h-1zM1034 349h1v1h-1zM1069 349h1v1h-1zM1139 349h1v1h-1zM1174 349h1v1h-1zM1209 349h1v1h-1zM1244 349h1v1h-1zM1314 349h1v1h-1zM1349 349h1v1h-1zM1384 349h1v1h-1zM1419 349h1v1h-1zM1489 349h1v1h-1zM1524 349h1v1h-1zM1559 349h1v1h-1zM1594 349h1v1h-1zM1664 349h1v1h-1zM1699 349h1v1h-1zM1734 349h1v1h-1zM20 361h1v1h-1zM90 361h1v1h-1zM125 361h1v1h-1zM160 361h1v1h-1zM195 361h1v1h-1zM265 361h1v1h-1zM300 361h1v1h-1zM335 361h1v1h-1zM370 361h1v1h-1zM440 361h1v1h-1zM475 361h1v1h-1zM510 361h1v1h-1zM545 361h1v1h-1zM615 361h1v1h-1zM650 361h1v1h-1zM685 361h1v1h-1zM720 361h1v1h-1zM790 361h1v1h-1zM825 361h1v1h-1zM860 361h1v1h-1zM895 361h1v1h-1zM964 361h1v1h-1zM999 361h1v1h-1zM1034 361h1v1h-1zM1069 361h1v1h-1zM1139 361h1v1h-1zM1174 361h1v1h-1zM1209 361h1v1h-1zM1244 361h1v1h-1zM1314 361h1v1h-1zM1349 361h1v1h-1zM1384 361h1v1h-1zM1419 361h1v1h-1zM1489 361h1v1h-1zM1524 361h1v1h-1zM1559 361h1v1h-1zM1594 361h1v1h-1zM1664 361h1v1h-1zM1699 361h1v1h-1zM1734 361h1v1h-1zM20 372h1v1h-1zM90 372h1v1h-1zM125 372h1v1h-1zM160 372h1v1h-1zM195 372h1v1h-1zM265 372h1v1h-1zM300 372h1v1h-1zM335 372h1v1h-1zM370 372h1v1h-1zM440 372h1v1h-1zM475 372h1v1h-1zM510 372h1v1h-1zM545 372h1v1h-1zM615 372h1v1h-1zM650 372h1v1h-1zM685 372h1v1h-1zM720 372h1v1h-1zM790 372h1v1h-1zM825 372h1v1h-1zM860 372h1v1h-1zM895 372h1v1h-1zM964 372h1v1h-1zM999 372h1v1h-1zM1034 372h1v1h-1zM1069 372h1v1h-1zM1139 372h1v1h-1zM1174 372h1v1h-1zM1209 372h1v1h-1zM1244 372h1v1h-1zM1314 372h1v1h-1zM1349 372h1v1h-1zM1384 372h1v1h-1zM1419 372h1v1h-1zM1489 372h1v1h-1zM1524 372h1v1h-1zM1559 372h1v1h-1zM1594 372h1v1h-1zM1664 372h1v1h-1zM1699 372h1v1h-1zM1734 372h1v1h-1zM20 384h1v1h-1zM90 384h1v1h-1zM125 384h1v1h-1zM160 384h1v1h-1zM195 384h1v1h-1zM265 384h1v1h-1zM300 384h1v1h-1zM335 384h1v1h-1zM370 384h1v1h-1zM440 384h1v1h-1zM475 384h1v1h-1zM510 384h1v1h-1zM545 384h1v1h-1zM615 384h1v1h-1zM650 384h1v1h-1zM685 384h1v1h-1zM720 384h1v1h-1zM790 384h1v1h-1zM825 384h1v1h-1zM860 384h1v1h-1zM895 384h1v1h-1zM964 384h1v1h-1zM999 384h1v1h-1zM1034 384h1v1h-1zM1069 384h1v1h-1zM1139 384h1v1h-1zM1174 384h1v1h-1zM1209 384h1v1h-1zM1244 384h1v1h-1zM1314 384h1v1h-1zM1349 384h1v1h-1zM1384 384h1v1h-1zM1419 384h1v1h-1zM1489 384h1v1h-1zM1524 384h1v1h-1zM1559 384h1v1h-1zM1594 384h1v1h-1zM1664 384h1v1h-1zM1699 384h1v1h-1zM1734 384h1v1h-1zM20 395h1v1h-1zM90 395h1v1h-1zM125 395h1v1h-1zM160 395h1v1h-1zM195 395h1v1h-1zM265 395h1v1h-1zM300 395h1v1h-1zM335 395h1v1h-1zM370 395h1v1h-1zM440 395h1v1h-1zM475 395h1v1h-1zM510 395h1v1h-1zM545 395h1v1h-1zM615 395h1v1h-1zM650 395h1v1h-1zM685 395h1v1h-1zM720 395h1v1h-1zM790 395h1v1h-1zM825 395h1v1h-1zM860 395h1v1h-1zM895 395h1v1h-1zM964 395h1v1h-1zM999 395h1v1h-1zM1034 395h1v1h-1zM1069 395h1v1h-1zM1139 395h1v1h-1zM1174 395h1v1h-1zM1209 395h1v1h-1zM1244 395h1v1h-1zM1314 395h1v1h-1zM1349 395h1v1h-1zM1384 395h1v1h-1zM1419 395h1v1h-1zM1489 395h1v1h-1zM1524 395h1v1h-1zM1559 395h1v1h-1zM1594 395h1v1h-1zM1664 395h1v1h-1zM1699 395h1v1h-1zM1734 395h1v1h-1zM20 409h1v1h-1zM90 409h1v1h-1zM125 409h1v1h-1zM160 409h1v1h-1zM195 409h1v1h-1zM265 409h1v1h-1zM300 409h1v1h-1zM335 409h1v1h-1zM370 409h1v1h-1zM440 409h1v1h-1zM475 409h1v1h-1zM510 409h1v1h-1zM545 409h1v1h-1zM615 409h1v1h-1zM650 409h1v1h-1zM685 409h1v1h-1zM720 409h1v1h-1zM790 409h1v1h-1zM825 409h1v1h-1zM860 409h1v1h-1zM895 409h1v1h-1zM964 409h1v1h-1zM999 409h1v1h-1zM1034 409h1v1h-1zM1069 409h1v1h-1zM1139 409h1v1h-1zM1174 409h1v1h-1zM1209 409h1v1h-1zM1244 409h1v1h-1zM1314 409h1v1h-1zM1349 409h1v1h-1zM1384 409h1v1h-1zM1419 409h1v1h-1zM1489 409h1v1h-1zM1524 409h1v1h-1zM1559 409h1v1h-1zM1594 409h1v1h-1zM1664 409h1v1h-1zM1699 409h1v1h-1zM1734 409h1v1h-1zM20 420h1v1h-1zM90 420h1v1h-1zM125 420h1v1h-1zM160 420h1v1h-1zM195 420h1v1h-1zM265 420h1v1h-1zM300 420h1v1h-1zM335 420h1v1h-1zM370 420h1v1h-1zM440 420h1v1h-1zM475 420h1v1h-1zM510 420h1v1h-1zM545 420h1v1h-1zM615 420h1v1h-1zM650 420h1v1h-1zM685 420h1v1h-1zM720 420h1v1h-1zM790 420h1v1h-1zM825 420h1v1h-1zM860 420h1v1h-1zM895 420h1v1h-1zM964 420h1v1h-1zM999 420h1v1h-1zM1034 420h1v1h-1zM1069 420h1v1h-1zM1139 420h1v1h-1zM1174 420h1v1h-1zM1209 420h1v1h-1zM1244 420h1v1h-1zM1314 420h1v1h-1zM1349 420h1v1h-1zM1384 420h1v1h-1zM1419 420h1v1h-1zM1489 420h1v1h-1zM1524 420h1v1h-1zM1559 420h1v1h-1zM1594 420h1v1h-1zM1664 420h1v1h-1zM1699 420h1v1h-1zM1734 420h1v1h-1zM20 432h1v1h-1zM90 432h1v1h-1zM125 432h1v1h-1zM160 432h1v1h-1zM195 432h1v1h-1zM265 432h1v1h-1zM300 432h1v1h-1zM335 432h1v1h-1zM370 432h1v1h-1zM440 432h1v1h-1zM475 432h1v1h-1zM510 432h1v1h-1zM545 432h1v1h-1zM615 432h1v1h-1zM650 432h1v1h-1zM685 432h1v1h-1zM720 432h1v1h-1zM790 432h1v1h-1zM825 432h1v1h-1zM860 432h1v1h-1zM895 432h1v1h-1zM964 432h1v1h-1zM999 432h1v1h-1zM1034 432h1v1h-1zM1069 432h1v1h-1zM1139 432h1v1h-1zM1174 432h1v1h-1zM1209 432h1v1h-1zM1244 432h1v1h-1zM1314 432h1v1h-1zM1349 432h1v1h-1zM1384 432h1v1h-1zM1419 432h1v1h-1zM1489 432h1v1h-1zM1524 432h1v1h-1zM1559 432h1v1h-1zM1594 432h1v1h-1zM1664 432h1v1h-1zM1699 432h1v1h-1zM1734 432h1v1h-1zM20 443h1v1h-1zM90 443h1v1h-1zM125 443h1v1h-1zM160 443h1v1h-1zM195 443h1v1h-1zM265 443h1v1h-1zM300 443h1v1h-1zM335 443h1v1h-1zM370 443h1v1h-1zM440 443h1v1h-1zM475 443h1v1h-1zM510 443h1v1h-1zM545 443h1v1h-1zM615 443h1v1h-1zM650 443h1v1h-1zM685 443h1v1h-1zM720 443h1v1h-1zM790 443h1v1h-1zM825 443h1v1h-1zM860 443h1v1h-1zM895 443h1v1h-1zM964 443h1v1h-1zM999 443h1v1h-1zM1034 443h1v1h-1zM1069 443h1v1h-1zM1139 443h1v1h-1zM1174 443h1v1h-1zM1209 443h1v1h-1zM1244 443h1v1h-1zM1314 443h1v1h-1zM1349 443h1v1h-1zM1384 443h1v1h-1zM1419 443h1v1h-1zM1489 443h1v1h-1zM1524 443h1v1h-1zM1559 443h1v1h-1zM1594 443h1v1h-1zM1664 443h1v1h-1zM1699 443h1v1h-1zM1734 443h1v1h-1zM20 455h1v1h-1zM90 455h1v1h-1zM125 455h1v1h-1zM160 455h1v1h-1zM195 455h1v1h-1zM265 455h1v1h-1zM300 455h1v1h-1zM335 455h1v1h-1zM370 455h1v1h-1zM440 455h1v1h-1zM475 455h1v1h-1zM510 455h1v1h-1zM545 455h1v1h-1zM615 455h1v1h-1zM650 455h1v1h-1zM685 455h1v1h-1zM720 455h1v1h-1zM790 455h1v1h-1zM825 455h1v1h-1zM860 455h1v1h-1zM895 455h1v1h-1zM964 455h1v1h-1zM999 455h1v1h-1zM1034 455h1v1h-1zM1069 455h1v1h-1zM1139 455h1v1h-1zM1174 455h1v1h-1zM1209 455h1v1h-1zM1244 455h1v1h-1zM1314 455h1v1h-1zM1349 455h1v1h-1zM1384 455h1v1h-1zM1419 455h1v1h-1zM1489 455h1v1h-1zM1524 455h1v1h-1zM1559 455h1v1h-1zM1594 455h1v1h-1zM1664 455h1v1h-1zM1699 455h1v1h-1zM1734 455h1v1h-1zM20 467h1v1h-1zM90 467h1v1h-1zM125 467h1v1h-1zM160 467h1v1h-1zM195 467h1v1h-1zM265 467h1v1h-1zM300 467h1v1h-1zM335 467h1v1h-1zM370 467h1v1h-1zM440 467h1v1h-1zM475 467h1v1h-1zM510 467h1v1h-1zM545 467h1v1h-1zM615 467h1v1h-1zM650 467h1v1h-1zM685 467h1v1h-1zM720 467h1v1h-1zM790 467h1v1h-1zM825 467h1v1h-1zM860 467h1v1h-1zM895 467h1v1h-1zM964 467h1v1h-1zM999 467h1v1h-1zM1034 467h1v1h-1zM1069 467h1v1h-1zM1139 467h1v1h-1zM1174 467h1v1h-1zM1209 467h1v1h-1zM1244 467h1v1h-1zM1314 467h1v1h-1zM1349 467h1v1h-1zM1384 467h1v1h-1zM1419 467h1v1h-1zM1489 467h1v1h-1zM1524 467h1v1h-1zM1559 467h1v1h-1zM1594 467h1v1h-1zM1664 467h1v1h-1zM1699 467h1v1h-1zM1734 467h1v1h-1zM20 478h1v1h-1zM90 478h1v1h-1zM125 478h1v1h-1zM160 478h1v1h-1zM195 478h1v1h-1zM265 478h1v1h-1zM300 478h1v1h-1zM335 478h1v1h-1zM370 478h1v1h-1zM440 478h1v1h-1zM475 478h1v1h-1zM510 478h1v1h-1zM545 478h1v1h-1zM615 478h1v1h-1zM650 478h1v1h-1zM685 478h1v1h-1zM720 478h1v1h-1zM790 478h1v1h-1zM825 478h1v1h-1zM860 478h1v1h-1zM895 478h1v1h-1zM964 478h1v1h-1zM999 478h1v1h-1zM1034 478h1v1h-1zM1069 478h1v1h-1zM1139 478h1v1h-1zM1174 478h1v1h-1zM1209 478h1v1h-1zM1244 478h1v1h-1zM1314 478h1v1h-1zM1349 478h1v1h-1zM1384 478h1v1h-1zM1419 478h1v1h-1zM1489 478h1v1h-1zM1524 478h1v1h-1zM1559 478h1v1h-1zM1594 478h1v1h-1zM1664 478h1v1h-1zM1699 478h1v1h-1zM1734 478h1v1h-1zM20 490h1v1h-1zM90 490h1v1h-1zM125 490h1v1h-1zM160 490h1v1h-1zM195 490h1v1h-1zM265 490h1v1h-1zM300 490h1v1h-1zM335 490h1v1h-1zM370 490h1v1h-1zM440 490h1v1h-1zM475 490h1v1h-1zM510 490h1v1h-1zM545 490h1v1h-1zM615 490h1v1h-1zM650 490h1v1h-1zM685 490h1v1h-1zM720 490h1v1h-1zM790 490h1v1h-1zM825 490h1v1h-1zM860 490h1v1h-1zM895 490h1v1h-1zM964 490h1v1h-1zM999 490h1v1h-1zM1034 490h1v1h-1zM1069 490h1v1h-1zM1139 490h1v1h-1zM1174 490h1v1h-1zM1209 490h1v1h-1zM1244 490h1v1h-1zM1314 490h1v1h-1zM1349 490h1v1h-1zM1384 490h1v1h-1zM1419 490h1v1h-1zM1489 490h1v1h-1zM1524 490h1v1h-1zM1559 490h1v1h-1zM1594 490h1v1h-1zM1664 490h1v1h-1zM1699 490h1v1h-1zM1734 490h1v1h-1zM20 501h1v1h-1zM90 501h1v1h-1zM125 501h1v1h-1zM160 501h1v1h-1zM195 501h1v1h-1zM265 501h1v1h-1zM300 501h1v1h-1zM335 501h1v1h-1zM370 501h1v1h-1zM440 501h1v1h-1zM475 501h1v1h-1zM510 501h1v1h-1zM545 501h1v1h-1zM615 501h1v1h-1zM650 501h1v1h-1zM685 501h1v1h-1zM720 501h1v1h-1zM790 501h1v1h-1zM825 501h1v1h-1zM860 501h1v1h-1zM895 501h1v1h-1zM964 501h1v1h-1zM999 501h1v1h-1zM1034 501h1v1h-1zM1069 501h1v1h-1zM1139 501h1v1h-1zM1174 501h1v1h-1zM1209 501h1v1h-1zM1244 501h1v1h-1zM1314 501h1v1h-1zM1349 501h1v1h-1zM1384 501h1v1h-1zM1419 501h1v1h-1zM1489 501h1v1h-1zM1524 501h1v1h-1zM1559 501h1v1h-1zM1594 501h1v1h-1zM1664 501h1v1h-1zM1699 501h1v1h-1zM1734 501h1v1h-1zM20 513h1v1h-1zM90 513h1v1h-1zM125 513h1v1h-1zM160 513h1v1h-1zM195 513h1v1h-1zM265 513h1v1h-1zM300 513h1v1h-1zM335 513h1v1h-1zM370 513h1v1h-1zM440 513h1v1h-1zM475 513h1v1h-1zM510 513h1v1h-1zM545 513h1v1h-1zM615 513h1v1h-1zM650 513h1v1h-1zM685 513h1v1h-1zM720 513h1v1h-1zM790 513h1v1h-1zM825 513h1v1h-1zM860 513h1v1h-1zM895 513h1v1h-1zM964 513h1v1h-1zM999 513h1v1h-1zM1034 513h1v1h-1zM1069 513h1v1h-1zM1139 513h1v1h-1zM1174 513h1v1h-1zM1209 513h1v1h-1zM1244 513h1v1h-1zM1314 513h1v1h-1zM1349 513h1v1h-1zM1384 513h1v1h-1zM1419 513h1v1h-1zM1489 513h1v1h-1zM1524 513h1v1h-1zM1559 513h1v1h-1zM1594 513h1v1h-1zM1664 513h1v1h-1zM1699 513h1v1h-1zM1734 513h1v1h-1zM20 526h1v1h-1zM90 526h1v1h-1zM125 526h1v1h-1zM160 526h1v1h-1zM195 526h1v1h-1zM265 526h1v1h-1zM300 526h1v1h-1zM335 526h1v1h-1zM370 526h1v1h-1zM440 526h1v1h-1zM475 526h1v1h-1zM510 526h1v1h-1zM545 526h1v1h-1zM615 526h1v1h-1zM650 526h1v1h-1zM685 526h1v1h-1zM720 526h1v1h-1zM790 526h1v1h-1zM825 526h1v1h-1zM860 526h1v1h-1zM895 526h1v1h-1zM964 526h1v1h-1zM999 526h1v1h-1zM1034 526h1v1h-1zM1069 526h1v1h-1zM1139 526h1v1h-1zM1174 526h1v1h-1zM1209 526h1v1h-1zM1244 526h1v1h-1zM1314 526h1v1h-1zM1349 526h1v1h-1zM1384 526h1v1h-1zM1419 526h1v1h-1zM1489 526h1v1h-1zM1524 526h1v1h-1zM1559 526h1v1h-1zM1594 526h1v1h-1zM1664 526h1v1h-1zM1699 526h1v1h-1zM1734 526h1v1h-1zM20 537h1v1h-1zM90 537h1v1h-1zM125 537h1v1h-1zM160 537h1v1h-1zM195 537h1v1h-1zM265 537h1v1h-1zM300 537h1v1h-1zM335 537h1v1h-1zM370 537h1v1h-1zM440 537h1v1h-1zM475 537h1v1h-1zM510 537h1v1h-1zM545 537h1v1h-1zM615 537h1v1h-1zM650 537h1v1h-1zM685 537h1v1h-1zM720 537h1v1h-1zM790 537h1v1h-1zM825 537h1v1h-1zM860 537h1v1h-1zM895 537h1v1h-1zM964 537h1v1h-1zM999 537h1v1h-1zM1034 537h1v1h-1zM1069 537h1v1h-1zM1139 537h1v1h-1zM1174 537h1v1h-1zM1209 537h1v1h-1zM1244 537h1v1h-1zM1314 537h1v1h-1zM1349 537h1v1h-1zM1384 537h1v1h-1zM1419 537h1v1h-1zM1489 537h1v1h-1zM1524 537h1v1h-1zM1559 537h1v1h-1zM1594 537h1v1h-1zM1664 537h1v1h-1zM1699 537h1v1h-1zM1734 537h1v1h-1zM20 549h1v1h-1zM90 549h1v1h-1zM125 549h1v1h-1zM160 549h1v1h-1zM195 549h1v1h-1zM265 549h1v1h-1zM300 549h1v1h-1zM335 549h1v1h-1zM370 549h1v1h-1zM440 549h1v1h-1zM475 549h1v1h-1zM510 549h1v1h-1zM545 549h1v1h-1zM615 549h1v1h-1zM650 549h1v1h-1zM685 549h1v1h-1zM720 549h1v1h-1zM790 549h1v1h-1zM825 549h1v1h-1zM860 549h1v1h-1zM895 549h1v1h-1zM964 549h1v1h-1zM999 549h1v1h-1zM1034 549h1v1h-1zM1069 549h1v1h-1zM1139 549h1v1h-1zM1174 549h1v1h-1zM1209 549h1v1h-1zM1244 549h1v1h-1zM1314 549h1v1h-1zM1349 549h1v1h-1zM1384 549h1v1h-1zM1419 549h1v1h-1zM1489 549h1v1h-1zM1524 549h1v1h-1zM1559 549h1v1h-1zM1594 549h1v1h-1zM1664 549h1v1h-1zM1699 549h1v1h-1zM1734 549h1v1h-1zM20 560h1v1h-1zM90 560h1v1h-1zM125 560h1v1h-1zM160 560h1v1h-1zM195 560h1v1h-1zM265 560h1v1h-1zM300 560h1v1h-1zM335 560h1v1h-1zM370 560h1v1h-1zM440 560h1v1h-1zM475 560h1v1h-1zM510 560h1v1h-1zM545 560h1v1h-1zM615 560h1v1h-1zM650 560h1v1h-1zM685 560h1v1h-1zM720 560h1v1h-1zM790 560h1v1h-1zM825 560h1v1h-1zM860 560h1v1h-1zM895 560h1v1h-1zM964 560h1v1h-1zM999 560h1v1h-1zM1034 560h1v1h-1zM1069 560h1v1h-1zM1139 560h1v1h-1zM1174 560h1v1h-1zM1209 560h1v1h-1zM1244 560h1v1h-1zM1314 560h1v1h-1zM1349 560h1v1h-1zM1384 560h1v1h-1zM1419 560h1v1h-1zM1489 560h1v1h-1zM1524 560h1v1h-1zM1559 560h1v1h-1zM1594 560h1v1h-1zM1664 560h1v1h-1zM1699 560h1v1h-1zM1734 560h1v1h-1zM20 572h1v1h-1zM90 572h1v1h-1zM125 572h1v1h-1zM160 572h1v1h-1zM195 572h1v1h-1zM265 572h1v1h-1zM300 572h1v1h-1zM335 572h1v1h-1zM370 572h1v1h-1zM440 572h1v1h-1zM475 572h1v1h-1zM510 572h1v1h-1zM545 572h1v1h-1zM615 572h1v1h-1zM650 572h1v1h-1zM685 572h1v1h-1zM720 572h1v1h-1zM790 572h1v1h-1zM825 572h1v1h-1zM860 572h1v1h-1zM895 572h1v1h-1zM964 572h1v1h-1zM999 572h1v1h-1zM1034 572h1v1h-1zM1069 572h1v1h-1zM1139 572h1v1h-1zM1174 572h1v1h-1zM1209 572h1v1h-1zM1244 572h1v1h-1zM1314 572h1v1h-1zM1349 572h1v1h-1zM1384 572h1v1h-1zM1419 572h1v1h-1zM1489 572h1v1h-1zM1524 572h1v1h-1zM1559 572h1v1h-1zM1594 572h1v1h-1zM1664 572h1v1h-1zM1699 572h1v1h-1zM1734 572h1v1h-1zM20 583h1v1h-1zM90 583h1v1h-1zM125 583h1v1h-1zM160 583h1v1h-1zM195 583h1v1h-1zM265 583h1v1h-1zM300 583h1v1h-1zM335 583h1v1h-1zM370 583h1v1h-1zM440 583h1v1h-1zM475 583h1v1h-1zM510 583h1v1h-1zM545 583h1v1h-1zM615 583h1v1h-1zM650 583h1v1h-1zM685 583h1v1h-1zM720 583h1v1h-1zM790 583h1v1h-1zM825 583h1v1h-1zM860 583h1v1h-1zM895 583h1v1h-1zM964 583h1v1h-1zM999 583h1v1h-1zM1034 583h1v1h-1zM1069 583h1v1h-1zM1139 583h1v1h-1zM1174 583h1v1h-1zM1209 583h1v1h-1zM1244 583h1v1h-1zM1314 583h1v1h-1zM1349 583h1v1h-1zM1384 583h1v1h-1zM1419 583h1v1h-1zM1489 583h1v1h-1zM1524 583h1v1h-1zM1559 583h1v1h-1zM1594 583h1v1h-1zM1664 583h1v1h-1zM1699 583h1v1h-1zM1734 583h1v1h-1zM20 595h1v1h-1zM90 595h1v1h-1zM125 595h1v1h-1zM160 595h1v1h-1zM195 595h1v1h-1zM265 595h1v1h-1zM300 595h1v1h-1zM335 595h1v1h-1zM370 595h1v1h-1zM440 595h1v1h-1zM475 595h1v1h-1zM510 595h1v1h-1zM545 595h1v1h-1zM615 595h1v1h-1zM650 595h1v1h-1zM685 595h1v1h-1zM720 595h1v1h-1zM790 595h1v1h-1zM825 595h1v1h-1zM860 595h1v1h-1zM895 595h1v1h-1zM964 595h1v1h-1zM999 595h1v1h-1zM1034 595h1v1h-1zM1069 595h1v1h-1zM1139 595h1v1h-1zM1174 595h1v1h-1zM1209 595h1v1h-1zM1244 595h1v1h-1zM1314 595h1v1h-1zM1349 595h1v1h-1zM1384 595h1v1h-1zM1419 595h1v1h-1zM1489 595h1v1h-1zM1524 595h1v1h-1zM1559 595h1v1h-1zM1594 595h1v1h-1zM1664 595h1v1h-1zM1699 595h1v1h-1zM1734 595h1v1h-1zM20 606h1v1h-1zM90 606h1v1h-1zM125 606h1v1h-1zM160 606h1v1h-1zM195 606h1v1h-1zM265 606h1v1h-1zM300 606h1v1h-1zM335 606h1v1h-1zM370 606h1v1h-1zM440 606h1v1h-1zM475 606h1v1h-1zM510 606h1v1h-1zM545 606h1v1h-1zM615 606h1v1h-1zM650 606h1v1h-1zM685 606h1v1h-1zM720 606h1v1h-1zM790 606h1v1h-1zM825 606h1v1h-1zM860 606h1v1h-1zM895 606h1v1h-1zM964 606h1v1h-1zM999 606h1v1h-1zM1034 606h1v1h-1zM1069 606h1v1h-1zM1139 606h1v1h-1zM1174 606h1v1h-1zM1209 606h1v1h-1zM1244 606h1v1h-1zM1314 606h1v1h-1zM1349 606h1v1h-1zM1384 606h1v1h-1zM1419 606h1v1h-1zM1489 606h1v1h-1zM1524 606h1v1h-1zM1559 606h1v1h-1zM1594 606h1v1h-1zM1664 606h1v1h-1zM1699 606h1v1h-1zM1734 606h1v1h-1zM20 618h1v1h-1zM90 618h1v1h-1zM125 618h1v1h-1zM160 618h1v1h-1zM195 618h1v1h-1zM265 618h1v1h-1zM300 618h1v1h-1zM335 618h1v1h-1zM370 618h1v1h-1zM440 618h1v1h-1zM475 618h1v1h-1zM510 618h1v1h-1zM545 618h1v1h-1zM615 618h1v1h-1zM650 618h1v1h-1zM685 618h1v1h-1zM720 618h1v1h-1zM790 618h1v1h-1zM825 618h1v1h-1zM860 618h1v1h-1zM895 618h1v1h-1zM964 618h1v1h-1zM999 618h1v1h-1zM1034 618h1v1h-1zM1069 618h1v1h-1zM1139 618h1v1h-1zM1174 618h1v1h-1zM1209 618h1v1h-1zM1244 618h1v1h-1zM1314 618h1v1h-1zM1349 618h1v1h-1zM1384 618h1v1h-1zM1419 618h1v1h-1zM1489 618h1v1h-1zM1524 618h1v1h-1zM1559 618h1v1h-1zM1594 618h1v1h-1zM1664 618h1v1h-1zM1699 618h1v1h-1zM1734 618h1v1h-1zM20 629h1v1h-1zM90 629h1v1h-1zM125 629h1v1h-1zM160 629h1v1h-1zM195 629h1v1h-1zM265 629h1v1h-1zM300 629h1v1h-1zM335 629h1v1h-1zM370 629h1v1h-1zM440 629h1v1h-1zM475 629h1v1h-1zM510 629h1v1h-1zM545 629h1v1h-1zM615 629h1v1h-1zM650 629h1v1h-1zM685 629h1v1h-1zM720 629h1v1h-1zM790 629h1v1h-1zM825 629h1v1h-1zM860 629h1v1h-1zM895 629h1v1h-1zM964 629h1v1h-1zM999 629h1v1h-1zM1034 629h1v1h-1zM1069 629h1v1h-1zM1139 629h1v1h-1zM1174 629h1v1h-1zM1209 629h1v1h-1zM1244 629h1v1h-1zM1314 629h1v1h-1zM1349 629h1v1h-1zM1384 629h1v1h-1zM1419 629h1v1h-1zM1489 629h1v1h-1zM1524 629h1v1h-1zM1559 629h1v1h-1zM1594 629h1v1h-1zM1664 629h1v1h-1zM1699 629h1v1h-1zM1734 629h1v1h-1zM20 643h1v1h-1zM90 643h1v1h-1zM125 643h1v1h-1zM160 643h1v1h-1zM195 643h1v1h-1zM265 643h1v1h-1zM300 643h1v1h-1zM335 643h1v1h-1zM370 643h1v1h-1zM440 643h1v1h-1zM475 643h1v1h-1zM510 643h1v1h-1zM545 643h1v1h-1zM615 643h1v1h-1zM650 643h1v1h-1zM685 643h1v1h-1zM720 643h1v1h-1zM790 643h1v1h-1zM825 643h1v1h-1zM860 643h1v1h-1zM895 643h1v1h-1zM964 643h1v1h-1zM999 643h1v1h-1zM1034 643h1v1h-1zM1069 643h1v1h-1zM1139 643h1v1h-1zM1174 643h1v1h-1zM1209 643h1v1h-1zM1244 643h1v1h-1zM1314 643h1v1h-1zM1349 643h1v1h-1zM1384 643h1v1h-1zM1419 643h1v1h-1zM1489 643h1v1h-1zM1524 643h1v1h-1zM1559 643h1v1h-1zM1594 643h1v1h-1zM1664 643h1v1h-1zM1699 643h1v1h-1zM1734 643h1v1h-1zM20 654h1v1h-1zM90 654h1v1h-1zM125 654h1v1h-1zM160 654h1v1h-1zM195 654h1v1h-1zM265 654h1v1h-1zM300 654h1v1h-1zM335 654h1v1h-1zM370 654h1v1h-1zM440 654h1v1h-1zM475 654h1v1h-1zM510 654h1v1h-1zM545 654h1v1h-1zM615 654h1v1h-1zM650 654h1v1h-1zM685 654h1v1h-1zM720 654h1v1h-1zM790 654h1v1h-1zM825 654h1v1h-1zM860 654h1v1h-1zM895 654h1v1h-1zM964 654h1v1h-1zM999 654h1v1h-1zM1034 654h1v1h-1zM1069 654h1v1h-1zM1139 654h1v1h-1zM1174 654h1v1h-1zM1209 654h1v1h-1zM1244 654h1v1h-1zM1314 654h1v1h-1zM1349 654h1v1h-1zM1384 654h1v1h-1zM1419 654h1v1h-1zM1489 654h1v1h-1zM1524 654h1v1h-1zM1559 654h1v1h-1zM1594 654h1v1h-1zM1664 654h1v1h-1zM1699 654h1v1h-1zM1734 654h1v1h-1zM20 666h1v1h-1zM90 666h1v1h-1zM125 666h1v1h-1zM160 666h1v1h-1zM195 666h1v1h-1zM265 666h1v1h-1zM300 666h1v1h-1zM335 666h1v1h-1zM370 666h1v1h-1zM440 666h1v1h-1zM475 666h1v1h-1zM510 666h1v1h-1zM545 666h1v1h-1zM615 666h1v1h-1zM650 666h1v1h-1zM685 666h1v1h-1zM720 666h1v1h-1zM790 666h1v1h-1zM825 666h1v1h-1zM860 666h1v1h-1zM895 666h1v1h-1zM964 666h1v1h-1zM999 666h1v1h-1zM1034 666h1v1h-1zM1069 666h1v1h-1zM1139 666h1v1h-1zM1174 666h1v1h-1zM1209 666h1v1h-1zM1244 666h1v1h-1zM1314 666h1v1h-1zM1349 666h1v1h-1zM1384 666h1v1h-1zM1419 666h1v1h-1zM1489 666h1v1h-1zM1524 666h1v1h-1zM1559 666h1v1h-1zM1594 666h1v1h-1zM1664 666h1v1h-1zM1699 666h1v1h-1zM1734 666h1v1h-1zM20 677h1v1h-1zM90 677h1v1h-1zM125 677h1v1h-1zM160 677h1v1h-1zM195 677h1v1h-1zM265 677h1v1h-1zM300 677h1v1h-1zM335 677h1v1h-1zM370 677h1v1h-1zM440 677h1v1h-1zM475 677h1v1h-1zM510 677h1v1h-1zM545 677h1v1h-1zM615 677h1v1h-1zM650 677h1v1h-1zM685 677h1v1h-1zM720 677h1v1h-1zM790 677h1v1h-1zM825 677h1v1h-1zM860 677h1v1h-1zM895 677h1v1h-1zM964 677h1v1h-1zM999 677h1v1h-1zM1034 677h1v1h-1zM1069 677h1v1h-1zM1139 677h1v1h-1zM1174 677h1v1h-1zM1209 677h1v1h-1zM1244 677h1v1h-1zM1314 677h1v1h-1zM1349 677h1v1h-1zM1384 677h1v1h-1zM1419 677h1v1h-1zM1489 677h1v1h-1zM1524 677h1v1h-1zM1559 677h1v1h-1zM1594 677h1v1h-1zM1664 677h1v1h-1zM1699 677h1v1h-1zM1734 677h1v1h-1zM20 689h1v1h-1zM90 689h1v1h-1zM125 689h1v1h-1zM160 689h1v1h-1zM195 689h1v1h-1zM265 689h1v1h-1zM300 689h1v1h-1zM335 689h1v1h-1zM370 689h1v1h-1zM440 689h1v1h-1zM475 689h1v1h-1zM510 689h1v1h-1zM545 689h1v1h-1zM615 689h1v1h-1zM650 689h1v1h-1zM685 689h1v1h-1zM720 689h1v1h-1zM790 689h1v1h-1zM825 689h1v1h-1zM860 689h1v1h-1zM895 689h1v1h-1zM964 689h1v1h-1zM999 689h1v1h-1zM1034 689h1v1h-1zM1069 689h1v1h-1zM1139 689h1v1h-1zM1174 689h1v1h-1zM1209 689h1v1h-1zM1244 689h1v1h-1zM1314 689h1v1h-1zM1349 689h1v1h-1zM1384 689h1v1h-1zM1419 689h1v1h-1zM1489 689h1v1h-1zM1524 689h1v1h-1zM1559 689h1v1h-1zM1594 689h1v1h-1zM1664 689h1v1h-1zM1699 689h1v1h-1zM1734 689h1v1h-1zM20 700h1v1h-1zM90 700h1v1h-1zM125 700h1v1h-1zM160 700h1v1h-1zM195 700h1v1h-1zM265 700h1v1h-1zM300 700h1v1h-1zM335 700h1v1h-1zM370 700h1v1h-1zM440 700h1v1h-1zM475 700h1v1h-1zM510 700h1v1h-1zM545 700h1v1h-1zM615 700h1v1h-1zM650 700h1v1h-1zM685 700h1v1h-1zM720 700h1v1h-1zM790 700h1v1h-1zM825 700h1v1h-1zM860 700h1v1h-1zM895 700h1v1h-1zM964 700h1v1h-1zM999 700h1v1h-1zM1034 700h1v1h-1zM1069 700h1v1h-1zM1139 700h1v1h-1zM1174 700h1v1h-1zM1209 700h1v1h-1zM1244 700h1v1h-1zM1314 700h1v1h-1zM1349 700h1v1h-1zM1384 700h1v1h-1zM1419 700h1v1h-1zM1489 700h1v1h-1zM1524 700h1v1h-1zM1559 700h1v1h-1zM1594 700h1v1h-1zM1664 700h1v1h-1zM1699 700h1v1h-1zM1734 700h1v1h-1zM20 712h1v1h-1zM90 712h1v1h-1zM125 712h1v1h-1zM160 712h1v1h-1zM195 712h1v1h-1zM265 712h1v1h-1zM300 712h1v1h-1zM335 712h1v1h-1zM370 712h1v1h-1zM440 712h1v1h-1zM475 712h1v1h-1zM510 712h1v1h-1zM545 712h1v1h-1zM615 712h1v1h-1zM650 712h1v1h-1zM685 712h1v1h-1zM720 712h1v1h-1zM790 712h1v1h-1zM825 712h1v1h-1zM860 712h1v1h-1zM895 712h1v1h-1zM964 712h1v1h-1zM999 712h1v1h-1zM1034 712h1v1h-1zM1069 712h1v1h-1zM1139 712h1v1h-1zM1174 712h1v1h-1zM1209 712h1v1h-1zM1244 712h1v1h-1zM1314 712h1v1h-1zM1349 712h1v1h-1zM1384 712h1v1h-1zM1419 712h1v1h-1zM1489 712h1v1h-1zM1524 712h1v1h-1zM1559 712h1v1h-1zM1594 712h1v1h-1zM1664 712h1v1h-1zM1699 712h1v1h-1zM1734 712h1v1h-1zM20 724h1v1h-1zM90 724h1v1h-1zM125 724h1v1h-1zM160 724h1v1h-1zM195 724h1v1h-1zM265 724h1v1h-1zM300 724h1v1h-1zM335 724h1v1h-1zM370 724h1v1h-1zM440 724h1v1h-1zM475 724h1v1h-1zM510 724h1v1h-1zM545 724h1v1h-1zM615 724h1v1h-1zM650 724h1v1h-1zM685 724h1v1h-1zM720 724h1v1h-1zM790 724h1v1h-1zM825 724h1v1h-1zM860 724h1v1h-1zM895 724h1v1h-1zM964 724h1v1h-1zM999 724h1v1h-1zM1034 724h1v1h-1zM1069 724h1v1h-1zM1139 724h1v1h-1zM1174 724h1v1h-1zM1209 724h1v1h-1zM1244 724h1v1h-1zM1314 724h1v1h-1zM1349 724h1v1h-1zM1384 724h1v1h-1zM1419 724h1v1h-1zM1489 724h1v1h-1zM1524 724h1v1h-1zM1559 724h1v1h-1zM1594 724h1v1h-1zM1664 724h1v1h-1zM1699 724h1v1h-1zM1734 724h1v1h-1zM20 735h1v1h-1zM90 735h1v1h-1zM125 735h1v1h-1zM160 735h1v1h-1zM195 735h1v1h-1zM265 735h1v1h-1zM300 735h1v1h-1zM335 735h1v1h-1zM370 735h1v1h-1zM440 735h1v1h-1zM475 735h1v1h-1zM510 735h1v1h-1zM545 735h1v1h-1zM615 735h1v1h-1zM650 735h1v1h-1zM685 735h1v1h-1zM720 735h1v1h-1zM790 735h1v1h-1zM825 735h1v1h-1zM860 735h1v1h-1zM895 735h1v1h-1zM964 735h1v1h-1zM999 735h1v1h-1zM1034 735h1v1h-1zM1069 735h1v1h-1zM1139 735h1v1h-1zM1174 735h1v1h-1zM1209 735h1v1h-1zM1244 735h1v1h-1zM1314 735h1v1h-1zM1349 735h1v1h-1zM1384 735h1v1h-1zM1419 735h1v1h-1zM1489 735h1v1h-1zM1524 735h1v1h-1zM1559 735h1v1h-1zM1594 735h1v1h-1zM1664 735h1v1h-1zM1699 735h1v1h-1zM1734 735h1v1h-1zM20 760h1v1h-1zM90 760h1v1h-1zM125 760h1v1h-1zM160 760h1v1h-1zM195 760h1v1h-1zM265 760h1v1h-1zM300 760h1v1h-1zM335 760h1v1h-1zM370 760h1v1h-1zM440 760h1v1h-1zM475 760h1v1h-1zM510 760h1v1h-1zM545 760h1v1h-1zM615 760h1v1h-1zM650 760h1v1h-1zM685 760h1v1h-1zM720 760h1v1h-1zM790 760h1v1h-1zM825 760h1v1h-1zM860 760h1v1h-1zM895 760h1v1h-1zM964 760h1v1h-1zM999 760h1v1h-1zM1034 760h1v1h-1zM1069 760h1v1h-1zM1139 760h1v1h-1zM1174 760h1v1h-1zM1209 760h1v1h-1zM1244 760h1v1h-1zM1314 760h1v1h-1zM1349 760h1v1h-1zM1384 760h1v1h-1zM1419 760h1v1h-1zM1489 760h1v1h-1zM1524 760h1v1h-1zM1559 760h1v1h-1zM1594 760h1v1h-1zM1664 760h1v1h-1zM1699 760h1v1h-1zM1734 760h1v1h-1zM20 771h1v1h-1zM90 771h1v1h-1zM125 771h1v1h-1zM160 771h1v1h-1zM195 771h1v1h-1zM265 771h1v1h-1zM300 771h1v1h-1zM335 771h1v1h-1zM370 771h1v1h-1zM440 771h1v1h-1zM475 771h1v1h-1zM510 771h1v1h-1zM545 771h1v1h-1zM615 771h1v1h-1zM650 771h1v1h-1zM685 771h1v1h-1zM720 771h1v1h-1zM790 771h1v1h-1zM825 771h1v1h-1zM860 771h1v1h-1zM895 771h1v1h-1zM964 771h1v1h-1zM999 771h1v1h-1zM1034 771h1v1h-1zM1069 771h1v1h-1zM1139 771h1v1h-1zM1174 771h1v1h-1zM1209 771h1v1h-1zM1244 771h1v1h-1zM1314 771h1v1h-1zM1349 771h1v1h-1zM1384 771h1v1h-1zM1419 771h1v1h-1zM1489 771h1v1h-1zM1524 771h1v1h-1zM1559 771h1v1h-1zM1594 771h1v1h-1zM1664 771h1v1h-1zM1699 771h1v1h-1zM1734 771h1v1h-1zM20 783h1v1h-1zM90 783h1v1h-1zM125 783h1v1h-1zM160 783h1v1h-1zM195 783h1v1h-1zM265 783h1v1h-1zM300 783h1v1h-1zM335 783h1v1h-1zM370 783h1v1h-1zM440 783h1v1h-1zM475 783h1v1h-1zM510 783h1v1h-1zM545 783h1v1h-1zM615 783h1v1h-1zM650 783h1v1h-1zM685 783h1v1h-1zM720 783h1v1h-1zM790 783h1v1h-1zM825 783h1v1h-1zM860 783h1v1h-1zM895 783h1v1h-1zM964 783h1v1h-1zM999 783h1v1h-1zM1034 783h1v1h-1zM1069 783h1v1h-1zM1139 783h1v1h-1zM1174 783h1v1h-1zM1209 783h1v1h-1zM1244 783h1v1h-1zM1314 783h1v1h-1zM1349 783h1v1h-1zM1384 783h1v1h-1zM1419 783h1v1h-1zM1489 783h1v1h-1zM1524 783h1v1h-1zM1559 783h1v1h-1zM1594 783h1v1h-1zM1664 783h1v1h-1zM1699 783h1v1h-1zM1734 783h1v1h-1zM20 794h1v1h-1zM90 794h1v1h-1zM125 794h1v1h-1zM160 794h1v1h-1zM195 794h1v1h-1zM265 794h1v1h-1zM300 794h1v1h-1zM335 794h1v1h-1zM370 794h1v1h-1zM440 794h1v1h-1zM475 794h1v1h-1zM510 794h1v1h-1zM545 794h1v1h-1zM615 794h1v1h-1zM650 794h1v1h-1zM685 794h1v1h-1zM720 794h1v1h-1zM790 794h1v1h-1zM825 794h1v1h-1zM860 794h1v1h-1zM895 794h1v1h-1zM964 794h1v1h-1zM999 794h1v1h-1zM1034 794h1v1h-1zM1069 794h1v1h-1zM1139 794h1v1h-1zM1174 794h1v1h-1zM1209 794h1v1h-1zM1244 794h1v1h-1zM1314 794h1v1h-1zM1349 794h1v1h-1zM1384 794h1v1h-1zM1419 794h1v1h-1zM1489 794h1v1h-1zM1524 794h1v1h-1zM1559 794h1v1h-1zM1594 794h1v1h-1zM1664 794h1v1h-1zM1699 794h1v1h-1zM1734 794h1v1h-1zM20 806h1v1h-1zM90 806h1v1h-1zM125 806h1v1h-1zM160 806h1v1h-1zM195 806h1v1h-1zM265 806h1v1h-1zM300 806h1v1h-1zM335 806h1v1h-1zM370 806h1v1h-1zM440 806h1v1h-1zM475 806h1v1h-1zM510 806h1v1h-1zM545 806h1v1h-1zM615 806h1v1h-1zM650 806h1v1h-1zM685 806h1v1h-1zM720 806h1v1h-1zM790 806h1v1h-1zM825 806h1v1h-1zM860 806h1v1h-1zM895 806h1v1h-1zM964 806h1v1h-1zM999 806h1v1h-1zM1034 806h1v1h-1zM1069 806h1v1h-1zM1139 806h1v1h-1zM1174 806h1v1h-1zM1209 806h1v1h-1zM1244 806h1v1h-1zM1314 806h1v1h-1zM1349 806h1v1h-1zM1384 806h1v1h-1zM1419 806h1v1h-1zM1489 806h1v1h-1zM1524 806h1v1h-1zM1559 806h1v1h-1zM1594 806h1v1h-1zM1664 806h1v1h-1zM1699 806h1v1h-1zM1734 806h1v1h-1zM20 817h1v1h-1zM90 817h1v1h-1zM125 817h1v1h-1zM160 817h1v1h-1zM195 817h1v1h-1zM265 817h1v1h-1zM300 817h1v1h-1zM335 817h1v1h-1zM370 817h1v1h-1zM440 817h1v1h-1zM475 817h1v1h-1zM510 817h1v1h-1zM545 817h1v1h-1zM615 817h1v1h-1zM650 817h1v1h-1zM685 817h1v1h-1zM720 817h1v1h-1zM790 817h1v1h-1zM825 817h1v1h-1zM860 817h1v1h-1zM895 817h1v1h-1zM964 817h1v1h-1zM999 817h1v1h-1zM1034 817h1v1h-1zM1069 817h1v1h-1zM1139 817h1v1h-1zM1174 817h1v1h-1zM1209 817h1v1h-1zM1244 817h1v1h-1zM1314 817h1v1h-1zM1349 817h1v1h-1zM1384 817h1v1h-1zM1419 817h1v1h-1zM1489 817h1v1h-1zM1524 817h1v1h-1zM1559 817h1v1h-1zM1594 817h1v1h-1zM1664 817h1v1h-1zM1699 817h1v1h-1zM1734 817h1v1h-1zM20 829h1v1h-1zM90 829h1v1h-1zM125 829h1v1h-1zM160 829h1v1h-1zM195 829h1v1h-1zM265 829h1v1h-1zM300 829h1v1h-1zM335 829h1v1h-1zM370 829h1v1h-1zM440 829h1v1h-1zM475 829h1v1h-1zM510 829h1v1h-1zM545 829h1v1h-1zM615 829h1v1h-1zM650 829h1v1h-1zM685 829h1v1h-1zM720 829h1v1h-1zM790 829h1v1h-1zM825 829h1v1h-1zM860 829h1v1h-1zM895 829h1v1h-1zM964 829h1v1h-1zM999 829h1v1h-1zM1034 829h1v1h-1zM1069 829h1v1h-1zM1139 829h1v1h-1zM1174 829h1v1h-1zM1209 829h1v1h-1zM1244 829h1v1h-1zM1314 829h1v1h-1zM1349 829h1v1h-1zM1384 829h1v1h-1zM1419 829h1v1h-1zM1489 829h1v1h-1zM1524 829h1v1h-1zM1559 829h1v1h-1zM1594 829h1v1h-1zM1664 829h1v1h-1zM1699 829h1v1h-1zM1734 829h1v1h-1zM20 840h1v1h-1zM90 840h1v1h-1zM125 840h1v1h-1zM160 840h1v1h-1zM195 840h1v1h-1zM265 840h1v1h-1zM300 840h1v1h-1zM335 840h1v1h-1zM370 840h1v1h-1zM440 840h1v1h-1zM475 840h1v1h-1zM510 840h1v1h-1zM545 840h1v1h-1zM615 840h1v1h-1zM650 840h1v1h-1zM685 840h1v1h-1zM720 840h1v1h-1zM790 840h1v1h-1zM825 840h1v1h-1zM860 840h1v1h-1zM895 840h1v1h-1zM964 840h1v1h-1zM999 840h1v1h-1zM1034 840h1v1h-1zM1069 840h1v1h-1zM1139 840h1v1h-1zM1174 840h1v1h-1zM1209 840h1v1h-1zM1244 840h1v1h-1zM1314 840h1v1h-1zM1349 840h1v1h-1zM1384 840h1v1h-1zM1419 840h1v1h-1zM1489 840h1v1h-1zM1524 840h1v1h-1zM1559 840h1v1h-1zM1594 840h1v1h-1zM1664 840h1v1h-1zM1699 840h1v1h-1zM1734 840h1v1h-1zM20 852h1v1h-1zM90 852h1v1h-1zM125 852h1v1h-1zM160 852h1v1h-1zM195 852h1v1h-1zM265 852h1v1h-1zM300 852h1v1h-1zM335 852h1v1h-1zM370 852h1v1h-1zM440 852h1v1h-1zM475 852h1v1h-1zM510 852h1v1h-1zM545 852h1v1h-1zM615 852h1v1h-1zM650 852h1v1h-1zM685 852h1v1h-1zM720 852h1v1h-1zM790 852h1v1h-1zM825 852h1v1h-1zM860 852h1v1h-1zM895 852h1v1h-1zM964 852h1v1h-1zM999 852h1v1h-1zM1034 852h1v1h-1zM1069 852h1v1h-1zM1139 852h1v1h-1zM1174 852h1v1h-1zM1209 852h1v1h-1zM1244 852h1v1h-1zM1314 852h1v1h-1zM1349 852h1v1h-1zM1384 852h1v1h-1zM1419 852h1v1h-1zM1489 852h1v1h-1zM1524 852h1v1h-1zM1559 852h1v1h-1zM1594 852h1v1h-1zM1664 852h1v1h-1zM1699 852h1v1h-1zM1734 852h1v1h-1zM20 863h1v1h-1zM90 863h1v1h-1zM125 863h1v1h-1zM160 863h1v1h-1zM195 863h1v1h-1zM265 863h1v1h-1zM300 863h1v1h-1zM335 863h1v1h-1zM370 863h1v1h-1zM440 863h1v1h-1zM475 863h1v1h-1zM510 863h1v1h-1zM545 863h1v1h-1zM615 863h1v1h-1zM650 863h1v1h-1zM685 863h1v1h-1zM720 863h1v1h-1zM790 863h1v1h-1zM825 863h1v1h-1zM860 863h1v1h-1zM895 863h1v1h-1zM964 863h1v1h-1zM999 863h1v1h-1zM1034 863h1v1h-1zM1069 863h1v1h-1zM1139 863h1v1h-1zM1174 863h1v1h-1zM1209 863h1v1h-1zM1244 863h1v1h-1zM1314 863h1v1h-1zM1349 863h1v1h-1zM1384 863h1v1h-1zM1419 863h1v1h-1zM1489 863h1v1h-1zM1524 863h1v1h-1zM1559 863h1v1h-1zM1594 863h1v1h-1zM1664 863h1v1h-1zM1699 863h1v1h-1zM1734 863h1v1h-1zM20 882h1v1h-1zM90 882h1v1h-1zM125 882h1v1h-1zM160 882h1v1h-1zM195 882h1v1h-1zM265 882h1v1h-1zM300 882h1v1h-1zM335 882h1v1h-1zM370 882h1v1h-1zM440 882h1v1h-1zM475 882h1v1h-1zM510 882h1v1h-1zM545 882h1v1h-1zM615 882h1v1h-1zM650 882h1v1h-1zM685 882h1v1h-1zM720 882h1v1h-1zM790 882h1v1h-1zM825 882h1v1h-1zM860 882h1v1h-1zM895 882h1v1h-1zM964 882h1v1h-1zM999 882h1v1h-1zM1034 882h1v1h-1zM1069 882h1v1h-1zM1139 882h1v1h-1zM1174 882h1v1h-1zM1209 882h1v1h-1zM1244 882h1v1h-1zM1314 882h1v1h-1zM1349 882h1v1h-1zM1384 882h1v1h-1zM1419 882h1v1h-1zM1489 882h1v1h-1zM1524 882h1v1h-1zM1559 882h1v1h-1zM1594 882h1v1h-1zM1664 882h1v1h-1zM1699 882h1v1h-1zM1734 882h1v1h-1zM20 893h1v1h-1zM90 893h1v1h-1zM125 893h1v1h-1zM160 893h1v1h-1zM195 893h1v1h-1zM265 893h1v1h-1zM300 893h1v1h-1zM335 893h1v1h-1zM370 893h1v1h-1zM440 893h1v1h-1zM475 893h1v1h-1zM510 893h1v1h-1zM545 893h1v1h-1zM615 893h1v1h-1zM650 893h1v1h-1zM685 893h1v1h-1zM720 893h1v1h-1zM790 893h1v1h-1zM825 893h1v1h-1zM860 893h1v1h-1zM895 893h1v1h-1zM964 893h1v1h-1zM999 893h1v1h-1zM1034 893h1v1h-1zM1069 893h1v1h-1zM1139 893h1v1h-1zM1174 893h1v1h-1zM1209 893h1v1h-1zM1244 893h1v1h-1zM1314 893h1v1h-1zM1349 893h1v1h-1zM1384 893h1v1h-1zM1419 893h1v1h-1zM1489 893h1v1h-1zM1524 893h1v1h-1zM1559 893h1v1h-1zM1594 893h1v1h-1zM1664 893h1v1h-1zM1699 893h1v1h-1zM1734 893h1v1h-1zM20 905h1v1h-1zM90 905h1v1h-1zM125 905h1v1h-1zM160 905h1v1h-1zM195 905h1v1h-1zM265 905h1v1h-1zM300 905h1v1h-1zM335 905h1v1h-1zM370 905h1v1h-1zM440 905h1v1h-1zM475 905h1v1h-1zM510 905h1v1h-1zM545 905h1v1h-1zM615 905h1v1h-1zM650 905h1v1h-1zM685 905h1v1h-1zM720 905h1v1h-1zM790 905h1v1h-1zM825 905h1v1h-1zM860 905h1v1h-1zM895 905h1v1h-1zM964 905h1v1h-1zM999 905h1v1h-1zM1034 905h1v1h-1zM1069 905h1v1h-1zM1139 905h1v1h-1zM1174 905h1v1h-1zM1209 905h1v1h-1zM1244 905h1v1h-1zM1314 905h1v1h-1zM1349 905h1v1h-1zM1384 905h1v1h-1zM1419 905h1v1h-1zM1489 905h1v1h-1zM1524 905h1v1h-1zM1559 905h1v1h-1zM1594 905h1v1h-1zM1664 905h1v1h-1zM1699 905h1v1h-1zM1734 905h1v1h-1zM20 917h1v1h-1zM90 917h1v1h-1zM125 917h1v1h-1zM160 917h1v1h-1zM195 917h1v1h-1zM265 917h1v1h-1zM300 917h1v1h-1zM335 917h1v1h-1zM370 917h1v1h-1zM440 917h1v1h-1zM475 917h1v1h-1zM510 917h1v1h-1zM545 917h1v1h-1zM615 917h1v1h-1zM650 917h1v1h-1zM685 917h1v1h-1zM720 917h1v1h-1zM790 917h1v1h-1zM825 917h1v1h-1zM860 917h1v1h-1zM895 917h1v1h-1zM964 917h1v1h-1zM999 917h1v1h-1zM1034 917h1v1h-1zM1069 917h1v1h-1zM1139 917h1v1h-1zM1174 917h1v1h-1zM1209 917h1v1h-1zM1244 917h1v1h-1zM1314 917h1v1h-1zM1349 917h1v1h-1zM1384 917h1v1h-1zM1419 917h1v1h-1zM1489 917h1v1h-1zM1524 917h1v1h-1zM1559 917h1v1h-1zM1594 917h1v1h-1zM1664 917h1v1h-1zM1699 917h1v1h-1zM1734 917h1v1h-1zM20 928h1v1h-1zM90 928h1v1h-1zM125 928h1v1h-1zM160 928h1v1h-1zM195 928h1v1h-1zM265 928h1v1h-1zM300 928h1v1h-1zM335 928h1v1h-1zM370 928h1v1h-1zM440 928h1v1h-1zM475 928h1v1h-1zM510 928h1v1h-1zM545 928h1v1h-1zM615 928h1v1h-1zM650 928h1v1h-1zM685 928h1v1h-1zM720 928h1v1h-1zM790 928h1v1h-1zM825 928h1v1h-1zM860 928h1v1h-1zM895 928h1v1h-1zM964 928h1v1h-1zM999 928h1v1h-1zM1034 928h1v1h-1zM1069 928h1v1h-1zM1139 928h1v1h-1zM1174 928h1v1h-1zM1209 928h1v1h-1zM1244 928h1v1h-1zM1314 928h1v1h-1zM1349 928h1v1h-1zM1384 928h1v1h-1zM1419 928h1v1h-1zM1489 928h1v1h-1zM1524 928h1v1h-1zM1559 928h1v1h-1zM1594 928h1v1h-1zM1664 928h1v1h-1zM1699 928h1v1h-1zM1734 928h1v1h-1zM20 940h1v1h-1zM90 940h1v1h-1zM125 940h1v1h-1zM160 940h1v1h-1zM195 940h1v1h-1zM265 940h1v1h-1zM300 940h1v1h-1zM335 940h1v1h-1zM370 940h1v1h-1zM440 940h1v1h-1zM475 940h1v1h-1zM510 940h1v1h-1zM545 940h1v1h-1zM615 940h1v1h-1zM650 940h1v1h-1zM685 940h1v1h-1zM720 940h1v1h-1zM790 940h1v1h-1zM825 940h1v1h-1zM860 940h1v1h-1zM895 940h1v1h-1zM964 940h1v1h-1zM999 940h1v1h-1zM1034 940h1v1h-1zM1069 940h1v1h-1zM1139 940h1v1h-1zM1174 940h1v1h-1zM1209 940h1v1h-1zM1244 940h1v1h-1zM1314 940h1v1h-1zM1349 940h1v1h-1zM1384 940h1v1h-1zM1419 940h1v1h-1zM1489 940h1v1h-1zM1524 940h1v1h-1zM1559 940h1v1h-1zM1594 940h1v1h-1zM1664 940h1v1h-1zM1699 940h1v1h-1zM1734 940h1v1h-1zM20 951h1v1h-1zM90 951h1v1h-1zM125 951h1v1h-1zM160 951h1v1h-1zM195 951h1v1h-1zM265 951h1v1h-1zM300 951h1v1h-1zM335 951h1v1h-1zM370 951h1v1h-1zM440 951h1v1h-1zM475 951h1v1h-1zM510 951h1v1h-1zM545 951h1v1h-1zM615 951h1v1h-1zM650 951h1v1h-1zM685 951h1v1h-1zM720 951h1v1h-1zM790 951h1v1h-1zM825 951h1v1h-1zM860 951h1v1h-1zM895 951h1v1h-1zM964 951h1v1h-1zM999 951h1v1h-1zM1034 951h1v1h-1zM1069 951h1v1h-1zM1139 951h1v1h-1zM1174 951h1v1h-1zM1209 951h1v1h-1zM1244 951h1v1h-1zM1314 951h1v1h-1zM1349 951h1v1h-1zM1384 951h1v1h-1zM1419 951h1v1h-1zM1489 951h1v1h-1zM1524 951h1v1h-1zM1559 951h1v1h-1zM1594 951h1v1h-1zM1664 951h1v1h-1zM1699 951h1v1h-1zM1734 951h1v1h-1zM20 963h1v1h-1zM90 963h1v1h-1zM125 963h1v1h-1zM160 963h1v1h-1zM195 963h1v1h-1zM265 963h1v1h-1zM300 963h1v1h-1zM335 963h1v1h-1zM370 963h1v1h-1zM440 963h1v1h-1zM475 963h1v1h-1zM510 963h1v1h-1zM545 963h1v1h-1zM615 963h1v1h-1zM650 963h1v1h-1zM685 963h1v1h-1zM720 963h1v1h-1zM790 963h1v1h-1zM825 963h1v1h-1zM860 963h1v1h-1zM895 963h1v1h-1zM964 963h1v1h-1zM999 963h1v1h-1zM1034 963h1v1h-1zM1069 963h1v1h-1zM1139 963h1v1h-1zM1174 963h1v1h-1zM1209 963h1v1h-1zM1244 963h1v1h-1zM1314 963h1v1h-1zM1349 963h1v1h-1zM1384 963h1v1h-1zM1419 963h1v1h-1zM1489 963h1v1h-1zM1524 963h1v1h-1zM1559 963h1v1h-1zM1594 963h1v1h-1zM1664 963h1v1h-1zM1699 963h1v1h-1zM1734 963h1v1h-1zM20 974h1v1h-1zM90 974h1v1h-1zM125 974h1v1h-1zM160 974h1v1h-1zM195 974h1v1h-1zM265 974h1v1h-1zM300 974h1v1h-1zM335 974h1v1h-1zM370 974h1v1h-1zM440 974h1v1h-1zM475 974h1v1h-1zM510 974h1v1h-1zM545 974h1v1h-1zM615 974h1v1h-1zM650 974h1v1h-1zM685 974h1v1h-1zM720 974h1v1h-1zM790 974h1v1h-1zM825 974h1v1h-1zM860 974h1v1h-1zM895 974h1v1h-1zM964 974h1v1h-1zM999 974h1v1h-1zM1034 974h1v1h-1zM1069 974h1v1h-1zM1139 974h1v1h-1zM1174 974h1v1h-1zM1209 974h1v1h-1zM1244 974h1v1h-1zM1314 974h1v1h-1zM1349 974h1v1h-1zM1384 974h1v1h-1zM1419 974h1v1h-1zM1489 974h1v1h-1zM1524 974h1v1h-1zM1559 974h1v1h-1zM1594 974h1v1h-1zM1664 974h1v1h-1zM1699 974h1v1h-1zM1734 974h1v1h-1zM20 986h1v1h-1zM90 986h1v1h-1zM125 986h1v1h-1zM160 986h1v1h-1zM195 986h1v1h-1zM265 986h1v1h-1zM300 986h1v1h-1zM335 986h1v1h-1zM370 986h1v1h-1zM440 986h1v1h-1zM475 986h1v1h-1zM510 986h1v1h-1zM545 986h1v1h-1zM615 986h1v1h-1zM650 986h1v1h-1zM685 986h1v1h-1zM720 986h1v1h-1zM790 986h1v1h-1zM825 986h1v1h-1zM860 986h1v1h-1zM895 986h1v1h-1zM964 986h1v1h-1zM999 986h1v1h-1zM1034 986h1v1h-1zM1069 986h1v1h-1zM1139 986h1v1h-1zM1174 986h1v1h-1zM1209 986h1v1h-1zM1244 986h1v1h-1zM1314 986h1v1h-1zM1349 986h1v1h-1zM1384 986h1v1h-1zM1419 986h1v1h-1zM1489 986h1v1h-1zM1524 986h1v1h-1zM1559 986h1v1h-1zM1594 986h1v1h-1zM1664 986h1v1h-1zM1699 986h1v1h-1zM1734 986h1v1h-1z" fill="#333333"/>
<line x1="230.5" y1="58" x2="230.5" y2="741" stroke="#3a3a3a" stroke-width="1" stroke-dasharray="1 1 1 1 1 2"/>
<line x1="230.5" y1="760" x2="230.5" y2="993" stroke="#3a3a3a" stroke-width="1" stroke-dasharray="1 1 1 1 1 2"/>
<line x1="405.5" y1="58" x2="405.5" y2="741" stroke="#3a3a3a" stroke-width="1" stroke-dasharray="1 1 1 1 1 2"/>
<line x1="405.5" y1="760" x2="405.5" y2="993" stroke="#3a3a3a" stroke-width="1" stroke-dasharray="1 1 1 1 1 2"/>
<line x1="580.5" y1="58" x2="580.5" y2="741" stroke="#3a3a3a" stroke-width="1" stroke-dasharray="1 1 1 1 1 2"/>
<line x1="580.5" y1="760" x2="580.5" y2="993" stroke="#3a3a3a" stroke-width="1" stroke-dasharray="1 1 1 1 1 2"/>
<line x1="755.5" y1="58" x2="755.5" y2="741" stroke="#3a3a3a" stroke-width="1" stroke-dasharray="1 1 1 1 1 2"/>
<line x1="755.5" y1="760" x2="755.5" y2="993" stroke="#3a3a3a" stroke-width="1" stroke-dasharray="1 1 1 1 1 2"/>
<line x1="929.5" y1="58" x2="929.5" y2="741" stroke="#3a3a3a" stroke-width="1" stroke-dasharray="1 1 1 1 1 2"/>
<line x1="929.5" y1="760" x2="929.5" y2="993" stroke="#3a3a3a" stroke-width="1" stroke-dasharray="1 1 1 1 1 2"/>
<line x1="1104.5" y1="58" x2="1104.5" y2="741" stroke="#3a3a3a" stroke-width="1" stroke-dasharray="1 1 1 1 1 2"/>
<line x1="1104.5" y1="760" x2="1104.5" y2="993" stroke="#3a3a3a" stroke-width="1" stroke-dasharray="1 1 1 1 1 2"/>
<line x1="1279.5" y1="58" x2="1279.5" y2="741" stroke="#3a3a3a" stroke-width="1" stroke-dasharray="1 1 1 1 1 2"/>
<line x1="1279.5" y1="760" x2="1279.5" y2="993" stroke="#3a3a3a" stroke-width="1" stroke-dasharray="1 1 1 1 1 2"/>
<line x1="1454.5" y1="58" x2="1454.5" y2="741" stroke="#3a3a3a" stroke-width="1" stroke-dasharray="1 1 1 1 1 2"/>
<line x1="1454.5" y1="760" x2="1454.5" y2="993" stroke="#3a3a3a" stroke-width="1" stroke-dasharray="1 1 1 1 1 2"/>
<line x1="1629.5" y1="58" x2="1629.5" y2="741" stroke="#3a3a3a" stroke-width="1" stroke-dasharray="1 1 1 1 1 2"/>
<line x1="1629.5" y1="760" x2="1629.5" y2="993" stroke="#3a3a3a" stroke-width="1" stroke-dasharray="1 1 1 1 1 2"/>
<line x1="55.5" y1="61" x2="55.5" y2="993" stroke="#333" stroke-width="1" stroke-dasharray="5 5"/>
<rect x="3" y="173" width="1748" height="2" fill="#555555"/>
<rect x="3" y="290" width="1748" height="2" fill="#555555"/>
<rect x="3" y="407" width="1748" height="2" fill="#555555"/>
<rect x="3" y="524" width="1748" height="2" fill="#555555"/>
<rect x="3" y="641" width="1748" height="2" fill="#555555"/>
<rect x="3" y="758" width="1748" height="2" fill="#555555"/>
<rect x="3" y="875" width="1748" height="2" fill="#555555"/>
<line x1="3" y1="161.5" x2="1718" y2="161.5" stroke="#444" stroke-width="1" stroke-dasharray="5 5"/>
<line x1="3" y1="246.5" x2="1740" y2="246.5" stroke="#444" stroke-width="1" stroke-dasharray="5 5"/>
<line x1="3" y1="478.5" x2="1740" y2="478.5" stroke="#444" stroke-width="1" stroke-dasharray="5 5"/>
<line x1="3" y1="863.5" x2="1718" y2="863.5" stroke="#444" stroke-width="1" stroke-dasharray="5 5"/>
<line x1="3" y1="905.5" x2="1718" y2="905.5" stroke="#444" stroke-width="1" stroke-dasharray="5 5"/>
<clipPath id="plotclip"><rect x="3" y="57.5" width="1748" height="935.8"/></clipPath>
<g clip-path="url(#plotclip)">
<polyline points="3.0,161.0 55.0,161.3 82.5,161.0 82.5,157.0 91.0,152.0 108.0,149.0 129.0,145.4 152.0,141.3 175.0,138.0 204.0,135.4 231.0,134.4 300.0,133.8 366.0,134.4 367.0,136.2 371.0,136.2 372.0,134.4 410.0,133.8 443.0,134.8 456.0,137.0 475.0,137.3 533.0,138.3 537.0,139.6 554.0,140.0 602.0,140.4 629.0,141.7 679.0,142.7 700.0,143.8 719.0,145.2 748.0,146.9 771.0,149.0 783.0,150.0 817.0,152.7 850.0,153.8 938.0,154.2 946.0,155.2 1027.0,156.7 1033.0,157.9 1296.0,158.0 1304.0,159.0 1310.0,156.0 1344.0,157.0 1345.0,160.8 1357.0,160.8 1365.0,158.0 1384.0,156.7 1455.0,156.7 1557.0,156.2 1560.0,157.3 1751.0,157.3" fill="none" stroke="#111111" stroke-width="1.25" stroke-linejoin="round" />
<rect x="1312" y="152.5" width="32" height="5" fill="#111"/>
<polyline points="3.0,245.5 55.0,245.5 55.5,246.0 56.0,180.0 57.0,205.0 58.0,214.0 60.0,218.0 66.0,219.5 81.0,219.5 90.0,222.5 288.0,224.3 288.5,238.5 289.5,225.0 291.0,224.4 440.0,228.0 1100.0,241.2 1760.0,251.0" fill="none" stroke="#22c3cc" stroke-width="1.4" stroke-linejoin="round" />
<polyline points="80.0,219.5 81.5,217.5 82.3,226.0 83.0,216.8 84.0,234.5 85.0,218.0 86.0,231.0 87.0,217.5 88.0,227.0 89.0,220.0 90.0,222.5" fill="none" stroke="#22c3cc" stroke-width="1.0" stroke-linejoin="round" />
<rect x="1310" y="240.5" width="36" height="8" fill="#22c3cc"/>
<polyline points="3.0,349.5 1751.0,349.5" fill="none" stroke="#e31b45" stroke-width="1.0" stroke-linejoin="round" />
<polygon points="54.5,349.0 56.0,297.3 58.0,312.0 59.5,349.0 58.5,385.0 56.5,394.5" fill="#e31b45" stroke="#e31b45" stroke-width="0.8"/>
<polygon points="82.0,349.0 83.0,340.0 86.0,350.0 83.0,366.0" fill="#e31b45" stroke="#e31b45" stroke-width="0.8"/>
<polygon points="287.5,349.5 288.5,336.0 291.0,347.0 295.0,350.0 291.0,352.0 288.5,364.0" fill="#e31b45" stroke="#e31b45" stroke-width="0.8"/>
<polygon points="1309.0,349.0 1309.0,332.0 1312.0,325.0 1318.0,325.0 1320.0,332.0 1345.0,332.0 1346.0,340.0 1350.0,347.0 1353.0,350.0 1345.0,350.0 1345.0,362.0 1320.0,362.0 1316.0,368.5 1311.0,368.5 1309.0,362.0" fill="#e31b45" stroke="#e31b45" stroke-width="0.8"/>
<polyline points="3.0,477.5 1751.0,477.5" fill="none" stroke="#86c84a" stroke-width="1.0" stroke-linejoin="round" />
<polyline points="3.0,583.5 1751.0,583.5" fill="none" stroke="#f29a3c" stroke-width="1.0" stroke-linejoin="round" />
<line x1="3" y1="583.5" x2="1718" y2="583.5" stroke="#484848" stroke-width="1" stroke-dasharray="5 5"/>
<line x1="3" y1="349.5" x2="1718" y2="349.5" stroke="#484848" stroke-width="1" stroke-dasharray="5 5"/>
<polyline points="3.0,742.5 55.5,742.5 55.5,654.5 83.0,654.5 84.0,643.5 86.0,643.5 87.0,650.0 88.0,643.5 90.0,644.0 91.0,654.5 288.0,654.5 288.5,643.5 290.0,645.0 294.0,654.5 1751.0,654.5" fill="none" stroke="#1f1fc4" stroke-width="1.2" stroke-linejoin="round" />
<path d="M1309 655H1346L1343 649.5H1313Z" fill="#1f1fc4"/>
<polyline points="3.0,863.5 55.0,863.5 55.0,863.4 68.3,861.7 86.0,859.4 107.0,856.7 130.4,853.7 155.2,850.6 180.4,847.4 205.0,844.3 228.0,841.5 250.0,838.9 272.0,836.2 294.2,833.6 316.4,831.0 338.6,828.5 360.8,826.0 383.0,823.6 405.0,821.3 426.9,819.1 448.8,816.9 470.6,814.8 492.4,812.8 514.2,810.9 536.0,808.9 557.8,807.1 579.6,805.2 601.6,803.4 623.9,801.6 646.4,799.8 668.8,798.1 690.9,796.4 712.7,794.8 733.8,793.2 754.3,791.8 773.5,790.5 791.4,789.2 808.5,788.0 825.3,786.9 842.3,785.8 860.1,784.8 879.1,783.8 900.0,782.8 923.2,781.8 948.6,780.8 975.4,779.8 1002.9,778.9 1030.4,778.0 1057.0,777.2 1082.1,776.4 1105.0,775.7 1124.4,775.1 1140.7,774.5 1155.0,773.9 1168.8,773.5 1183.2,773.0 1199.7,772.7 1219.4,772.4 1243.8,772.1 1274.8,771.9 1312.0,771.8 1353.2,771.7 1396.1,771.7 1438.4,771.8 1477.9,771.9 1512.1,772.0 1539.0,772.1 1558.1,772.3 1571.4,772.5 1580.2,772.8 1585.9,773.1 1589.6,773.5 1592.7,773.8 1596.4,774.1 1602.0,774.3 1608.4,774.5 1614.0,774.6 1619.2,774.8 1624.2,774.9 1629.5,774.9 1635.5,775.0 1642.5,775.1 1651.0,775.2 1661.7,775.3 1674.8,775.4 1689.2,775.4 1704.1,775.5 1718.6,775.6 1731.8,775.6 1742.9,775.7 1751.0,775.7" fill="none" stroke="#ec8c2a" stroke-width="1.15" stroke-linejoin="round" />
<polyline points="3.0,978.5 28.0,978.5 30.0,979.5 150.0,979.5 200.0,978.8 650.0,979.0 1100.0,980.5 1751.0,981.5" fill="none" stroke="#6e1e98" stroke-width="1.1" stroke-linejoin="round" />
<rect x="1311" y="980" width="34" height="3" fill="#6e1e98"/>
</g>
<path d="M10 103H76L84 115.75L76 128.5H10Q7 128.5 7 125.5V106Q7 103 10 103Z" fill="#e6e6e6"/>
<path d="M10 103H76L84 115.75L76 128.5H10Q7 128.5 7 125.5V106Q7 103 10 103Z" fill="none" stroke="#2a2a2a" stroke-width="2" stroke-linejoin="round"/>
<line x1="33" y1="103" x2="33" y2="128.5" stroke="#2a2a2a" stroke-width="2"/>
<text x="20.3" y="119.35" font-size="12" fill="#111" text-anchor="middle" stroke="#111" stroke-width="0.12" letter-spacing="-0.2">C 1</text>
<text x="56.0" y="119.35" font-size="12" fill="#111" text-anchor="middle" stroke="#111" stroke-width="0.12" >20 V</text>
<path d="M10 220H75.5L83.5 232.75L75.5 245.5H10Q7 245.5 7 242.5V223Q7 220 10 220Z" fill="#e8f9f9"/>
<path d="M10 220H75.5L83.5 232.75L75.5 245.5H10Q7 245.5 7 242.5V223Q7 220 10 220Z" fill="none" stroke="#22c3cc" stroke-width="2" stroke-linejoin="round"/>
<line x1="33" y1="220" x2="33" y2="245.5" stroke="#22c3cc" stroke-width="2"/>
<text x="20.3" y="236.35" font-size="12" fill="#111" text-anchor="middle" stroke="#111" stroke-width="0.12" letter-spacing="-0.2">C 2</text>
<text x="55.75" y="236.35" font-size="12" fill="#111" text-anchor="middle" stroke="#111" stroke-width="0.12" >300 mV</text>
<path d="M10 337.5H34L42 349.75L34 362H10Q7 362 7 359V340.5Q7 337.5 10 337.5Z" fill="#fdecef" stroke="#f3839b" stroke-width="1.6" stroke-linejoin="round"/>
<text x="21.3" y="353.35" font-size="12" fill="#e0506e" text-anchor="middle" stroke="#e0506e" stroke-width="0.12" letter-spacing="-0.2">C 3</text>
<path d="M10 454H76L84 466.5L76 479H10Q7 479 7 476V457Q7 454 10 454Z" fill="#f1f8ea"/>
<path d="M10 454H76L84 466.5L76 479H10Q7 479 7 476V457Q7 454 10 454Z" fill="none" stroke="#86c84a" stroke-width="2" stroke-linejoin="round"/>
<line x1="33" y1="454" x2="33" y2="479" stroke="#86c84a" stroke-width="2"/>
<text x="20.3" y="470.1" font-size="12" fill="#111" text-anchor="middle" stroke="#111" stroke-width="0.12" letter-spacing="-0.2">C 4</text>
<text x="56.0" y="470.1" font-size="12" fill="#111" text-anchor="middle" stroke="#111" stroke-width="0.12" >200 mV</text>
<path d="M10 571.5H34L42 584.0L34 596.5H10Q7 596.5 7 593.5V574.5Q7 571.5 10 571.5Z" fill="#fff5ea" stroke="#f6b36e" stroke-width="1.6" stroke-linejoin="round"/>
<text x="21.3" y="587.6" font-size="12" fill="#111" text-anchor="middle" stroke="#111" stroke-width="0.12" letter-spacing="-0.2">C 5</text>
<path d="M10 688H75.5L83.5 700.5L75.5 713H10Q7 713 7 710V691Q7 688 10 688Z" fill="#e6e6f4"/>
<path d="M10 688H33V713H10Q7 713 7 710V691Q7 688 10 688Z" fill="#2b2bc8"/>
<path d="M10 688H75.5L83.5 700.5L75.5 713H10Q7 713 7 710V691Q7 688 10 688Z" fill="none" stroke="#111111" stroke-width="2" stroke-linejoin="round"/>
<line x1="33" y1="688" x2="33" y2="713" stroke="#111111" stroke-width="2"/>
<text x="20.3" y="704.1" font-size="12" fill="#ffffff" text-anchor="middle" stroke="#ffffff" stroke-width="0.12" letter-spacing="-0.2">C 6</text>
<text x="55.75" y="704.1" font-size="12" fill="#2b2bc8" text-anchor="middle" stroke="#2b2bc8" stroke-width="0.12" >3 V</text>
<path d="M10 851.5H34L42 862.75L34 874H10Q7 874 7 871V854.5Q7 851.5 10 851.5Z" fill="#fff5ea" stroke="#f6b36e" stroke-width="1.6" stroke-linejoin="round"/>
<text x="21.3" y="866.35" font-size="12" fill="#111" text-anchor="middle" stroke="#111" stroke-width="0.12" letter-spacing="-0.2">M 1</text>
<path d="M10 892.5H34L42 904.75L34 917H10Q7 917 7 914V895.5Q7 892.5 10 892.5Z" fill="#f3ecf7" stroke="#9a5cbc" stroke-width="1.6" stroke-linejoin="round"/>
<text x="21.3" y="908.35" font-size="12" fill="#7a3aa0" text-anchor="middle" stroke="#7a3aa0" stroke-width="0.12" letter-spacing="-0.2">M 2</text>
<text x="102.3" y="122.2" font-size="20" fill="#000" stroke="#000" stroke-width="0.15" opacity="0.85" textLength="96" lengthAdjust="spacingAndGlyphs">U_loop,coil</text>
<text x="102" y="121.9" font-size="20" fill="#161616" stroke="#161616" stroke-width="0.3" textLength="96" lengthAdjust="spacingAndGlyphs">U_loop,coil</text>
<text x="102.6" y="239.1" font-size="20" fill="#000" stroke="#000" stroke-width="0.15" opacity="0.85" textLength="75" lengthAdjust="spacingAndGlyphs">U_Bt,coil</text>
<text x="102" y="238.5" font-size="20" fill="#1fc4cc" stroke="#1fc4cc" stroke-width="0.3" textLength="75" lengthAdjust="spacingAndGlyphs">U_Bt,coil</text>
<text x="55.2" y="355.8" font-size="20" fill="#000" stroke="#000" stroke-width="0.15" opacity="0.85" textLength="90" lengthAdjust="spacingAndGlyphs">U_Rog,coil</text>
<text x="54.6" y="355.2" font-size="20" fill="#e0294a" stroke="#e0294a" stroke-width="0.3" textLength="90" lengthAdjust="spacingAndGlyphs">U_Rog,coil</text>
<text x="102.6" y="473.0" font-size="20" fill="#000" stroke="#000" stroke-width="0.15" opacity="0.85" textLength="84.5" lengthAdjust="spacingAndGlyphs">U_Photod</text>
<text x="102" y="472.4" font-size="20" fill="#7cc332" stroke="#7cc332" stroke-width="0.3" textLength="84.5" lengthAdjust="spacingAndGlyphs">U_Photod</text>
<text x="55.0" y="590.3000000000001" font-size="20" fill="#000" stroke="#000" stroke-width="0.15" opacity="0.85" textLength="100" lengthAdjust="spacingAndGlyphs">U_Diamagn</text>
<text x="54.4" y="589.7" font-size="20" fill="#f59425" stroke="#f59425" stroke-width="0.3" textLength="100" lengthAdjust="spacingAndGlyphs">U_Diamagn</text>
<text x="101.2" y="707.1" font-size="20" fill="#101040" stroke="#101040" stroke-width="0.15" opacity="0.85" textLength="63" lengthAdjust="spacingAndGlyphs">Trigger</text>
<text x="100.8" y="706.7" font-size="20" fill="#2323b8" stroke="#2323b8" stroke-width="0.3" textLength="63" lengthAdjust="spacingAndGlyphs">Trigger</text>
<text x="54.8" y="863.4" font-size="26" fill="#7a4000" stroke="#7a4000" stroke-width="0.15" opacity="0.85" textLength="38" lengthAdjust="spacingAndGlyphs">B_t</text>
<text x="54.4" y="863" font-size="26" fill="#f08a20" stroke="#f08a20" stroke-width="0.3" textLength="38" lengthAdjust="spacingAndGlyphs">B_t</text>
<text x="54.9" y="910.7" font-size="19" fill="#2a0040" stroke="#2a0040" stroke-width="0.15" opacity="0.85" textLength="24.5" lengthAdjust="spacingAndGlyphs">I_p</text>
<text x="54.4" y="910.2" font-size="19" fill="#7a2ea6" stroke="#7a2ea6" stroke-width="0.3" textLength="24.5" lengthAdjust="spacingAndGlyphs">I_p</text>
<polygon points="45,57.5 65,57.5 55,67.5" fill="#f58a1f"/>
<path d="M46 644.3H64V663H59.5L55 669.5L50.5 663H46Z" fill="#000" stroke="#f58a1f" stroke-width="2"/>
<path d="M50 648.5H60M55 648.5V659" stroke="#f58a1f" stroke-width="2.6"/>
<path d="M1730 700.4L1742 690.4V699.2H1751V701.7H1742V710.2Z" fill="#2626c4"/>
<text x="1746.7" y="97.5" font-size="13.6" fill="#000" stroke="#000" stroke-width="0.15" opacity="0.85" text-anchor="end">30 V</text>
<text x="1746" y="96.8" font-size="13.6" fill="#141414" stroke="#141414" stroke-width="0.3" text-anchor="end">30 V</text>
<text x="1746.7" y="120.5" font-size="13.6" fill="#000" stroke="#000" stroke-width="0.15" opacity="0.85" text-anchor="end">20 V</text>
<text x="1746" y="119.8" font-size="13.6" fill="#141414" stroke="#141414" stroke-width="0.3" text-anchor="end">20 V</text>
<text x="1746.7" y="143.5" font-size="13.6" fill="#000" stroke="#000" stroke-width="0.15" opacity="0.85" text-anchor="end">10 V</text>
<text x="1746" y="142.8" font-size="13.6" fill="#141414" stroke="#141414" stroke-width="0.3" text-anchor="end">10 V</text>
<text x="1746.7" y="166.5" font-size="13.6" fill="#000" stroke="#000" stroke-width="0.15" opacity="0.85" text-anchor="end">0 V</text>
<text x="1746" y="165.8" font-size="13.6" fill="#141414" stroke="#141414" stroke-width="0.3" text-anchor="end">0 V</text>
<text x="1746.7" y="195.5" font-size="13.6" fill="#000" stroke="#000" stroke-width="0.15" opacity="0.85" text-anchor="end">1.25 V</text>
<text x="1746" y="194.8" font-size="13.6" fill="#1fc4cc" stroke="#1fc4cc" stroke-width="0.3" text-anchor="end">1.25 V</text>
<text x="1746.7" y="218.5" font-size="13.6" fill="#000" stroke="#000" stroke-width="0.15" opacity="0.85" text-anchor="end">750 mV</text>
<text x="1746" y="217.8" font-size="13.6" fill="#1fc4cc" stroke="#1fc4cc" stroke-width="0.3" text-anchor="end">750 mV</text>
<text x="1746.7" y="241.5" font-size="13.6" fill="#000" stroke="#000" stroke-width="0.15" opacity="0.85" text-anchor="end">250 mV</text>
<text x="1746" y="240.8" font-size="13.6" fill="#1fc4cc" stroke="#1fc4cc" stroke-width="0.3" text-anchor="end">250 mV</text>
<text x="1746.7" y="265.0" font-size="13.6" fill="#000" stroke="#000" stroke-width="0.15" opacity="0.85" text-anchor="end">-250 mV</text>
<text x="1746" y="264.3" font-size="13.6" fill="#1fc4cc" stroke="#1fc4cc" stroke-width="0.3" text-anchor="end">-250 mV</text>
<text x="1746.7" y="287.5" font-size="13.6" fill="#000" stroke="#000" stroke-width="0.15" opacity="0.85" text-anchor="end">-750 mV</text>
<text x="1746" y="286.8" font-size="13.6" fill="#1fc4cc" stroke="#1fc4cc" stroke-width="0.3" text-anchor="end">-750 mV</text>
<text x="1746.7" y="309.5" font-size="13.6" fill="#000" stroke="#000" stroke-width="0.15" opacity="0.85" text-anchor="end">1.80 V</text>
<text x="1746" y="308.8" font-size="13.6" fill="#e0294a" stroke="#e0294a" stroke-width="0.3" text-anchor="end">1.80 V</text>
<text x="1746.7" y="332.5" font-size="13.6" fill="#000" stroke="#000" stroke-width="0.15" opacity="0.85" text-anchor="end">900 mV</text>
<text x="1746" y="331.8" font-size="13.6" fill="#e0294a" stroke="#e0294a" stroke-width="0.3" text-anchor="end">900 mV</text>
<text x="1746.7" y="355.5" font-size="13.6" fill="#000" stroke="#000" stroke-width="0.15" opacity="0.85" text-anchor="end">0 V</text>
<text x="1746" y="354.8" font-size="13.6" fill="#e0294a" stroke="#e0294a" stroke-width="0.3" text-anchor="end">0 V</text>
<text x="1746.7" y="378.5" font-size="13.6" fill="#000" stroke="#000" stroke-width="0.15" opacity="0.85" text-anchor="end">-900 mV</text>
<text x="1746" y="377.8" font-size="13.6" fill="#e0294a" stroke="#e0294a" stroke-width="0.3" text-anchor="end">-900 mV</text>
<text x="1746.7" y="401.5" font-size="13.6" fill="#000" stroke="#000" stroke-width="0.15" opacity="0.85" text-anchor="end">-1.80 V</text>
<text x="1746" y="400.8" font-size="13.6" fill="#e0294a" stroke="#e0294a" stroke-width="0.3" text-anchor="end">-1.80 V</text>
<text x="1746.7" y="426.5" font-size="13.6" fill="#000" stroke="#000" stroke-width="0.15" opacity="0.85" text-anchor="end">1 V</text>
<text x="1746" y="425.8" font-size="13.6" fill="#7cc332" stroke="#7cc332" stroke-width="0.3" text-anchor="end">1 V</text>
<text x="1746.7" y="449.5" font-size="13.6" fill="#000" stroke="#000" stroke-width="0.15" opacity="0.85" text-anchor="end">600 mV</text>
<text x="1746" y="448.8" font-size="13.6" fill="#7cc332" stroke="#7cc332" stroke-width="0.3" text-anchor="end">600 mV</text>
<text x="1746.7" y="472.5" font-size="13.6" fill="#000" stroke="#000" stroke-width="0.15" opacity="0.85" text-anchor="end">200 mV</text>
<text x="1746" y="471.8" font-size="13.6" fill="#7cc332" stroke="#7cc332" stroke-width="0.3" text-anchor="end">200 mV</text>
<text x="1746.7" y="495.5" font-size="13.6" fill="#000" stroke="#000" stroke-width="0.15" opacity="0.85" text-anchor="end">-200 mV</text>
<text x="1746" y="494.8" font-size="13.6" fill="#7cc332" stroke="#7cc332" stroke-width="0.3" text-anchor="end">-200 mV</text>
<text x="1746.7" y="518.5" font-size="13.6" fill="#000" stroke="#000" stroke-width="0.15" opacity="0.85" text-anchor="end">-600 mV</text>
<text x="1746" y="517.8" font-size="13.6" fill="#7cc332" stroke="#7cc332" stroke-width="0.3" text-anchor="end">-600 mV</text>
<text x="1746.7" y="543.2" font-size="13.6" fill="#000" stroke="#000" stroke-width="0.15" opacity="0.85" text-anchor="end">4 V</text>
<text x="1746" y="542.5" font-size="13.6" fill="#f59425" stroke="#f59425" stroke-width="0.3" text-anchor="end">4 V</text>
<text x="1746.7" y="566.3" font-size="13.6" fill="#000" stroke="#000" stroke-width="0.15" opacity="0.85" text-anchor="end">2 V</text>
<text x="1746" y="565.5999999999999" font-size="13.6" fill="#f59425" stroke="#f59425" stroke-width="0.3" text-anchor="end">2 V</text>
<text x="1746.7" y="589.1" font-size="13.6" fill="#000" stroke="#000" stroke-width="0.15" opacity="0.85" text-anchor="end">0 V</text>
<text x="1746" y="588.4" font-size="13.6" fill="#f59425" stroke="#f59425" stroke-width="0.3" text-anchor="end">0 V</text>
<text x="1746.7" y="612.0" font-size="13.6" fill="#000" stroke="#000" stroke-width="0.15" opacity="0.85" text-anchor="end">-2 V</text>
<text x="1746" y="611.3" font-size="13.6" fill="#f59425" stroke="#f59425" stroke-width="0.3" text-anchor="end">-2 V</text>
<text x="1746.7" y="635.0" font-size="13.6" fill="#000" stroke="#000" stroke-width="0.15" opacity="0.85" text-anchor="end">-4 V</text>
<text x="1746" y="634.3" font-size="13.6" fill="#f59425" stroke="#f59425" stroke-width="0.3" text-anchor="end">-4 V</text>
<text x="1746.7" y="659.8" font-size="13.6" fill="#000" stroke="#000" stroke-width="0.15" opacity="0.85" text-anchor="end">6 V</text>
<text x="1746" y="659.0999999999999" font-size="13.6" fill="#2a2ac0" stroke="#2a2ac0" stroke-width="0.3" text-anchor="end">6 V</text>
<text x="1746.7" y="683.2" font-size="13.6" fill="#000" stroke="#000" stroke-width="0.15" opacity="0.85" text-anchor="end">4.50 V</text>
<text x="1746" y="682.5" font-size="13.6" fill="#2a2ac0" stroke="#2a2ac0" stroke-width="0.3" text-anchor="end">4.50 V</text>
<text x="1746.7" y="728.8" font-size="13.6" fill="#000" stroke="#000" stroke-width="0.15" opacity="0.85" text-anchor="end">1.50 V</text>
<text x="1746" y="728.0999999999999" font-size="13.6" fill="#2a2ac0" stroke="#2a2ac0" stroke-width="0.3" text-anchor="end">1.50 V</text>
<text x="1746.7" y="752.8" font-size="13.6" fill="#000" stroke="#000" stroke-width="0.15" opacity="0.85" text-anchor="end">0 V</text>
<text x="1746" y="752.0999999999999" font-size="13.6" fill="#2a2ac0" stroke="#2a2ac0" stroke-width="0.3" text-anchor="end">0 V</text>
<text x="1746.7" y="778.2" font-size="13.6" fill="#000" stroke="#000" stroke-width="0.15" opacity="0.85" text-anchor="end">580.147 mT</text>
<text x="1746" y="777.5" font-size="13.6" fill="#f08a20" stroke="#f08a20" stroke-width="0.3" text-anchor="end">580.147 mT</text>
<text x="1746.7" y="800.8" font-size="13.6" fill="#000" stroke="#000" stroke-width="0.15" opacity="0.85" text-anchor="end">435.110 mT</text>
<text x="1746" y="800.0999999999999" font-size="13.6" fill="#f08a20" stroke="#f08a20" stroke-width="0.3" text-anchor="end">435.110 mT</text>
<text x="1746.7" y="823.5" font-size="13.6" fill="#000" stroke="#000" stroke-width="0.15" opacity="0.85" text-anchor="end">290.073 mT</text>
<text x="1746" y="822.8" font-size="13.6" fill="#f08a20" stroke="#f08a20" stroke-width="0.3" text-anchor="end">290.073 mT</text>
<text x="1746.7" y="846.5" font-size="13.6" fill="#000" stroke="#000" stroke-width="0.15" opacity="0.85" text-anchor="end">145.037 mT</text>
<text x="1746" y="845.8" font-size="13.6" fill="#f08a20" stroke="#f08a20" stroke-width="0.3" text-anchor="end">145.037 mT</text>
<text x="1746.7" y="869.5" font-size="13.6" fill="#000" stroke="#000" stroke-width="0.15" opacity="0.85" text-anchor="end">0 T</text>
<text x="1746" y="868.8" font-size="13.6" fill="#f08a20" stroke="#f08a20" stroke-width="0.3" text-anchor="end">0 T</text>
<text x="1746.7" y="911.5" font-size="13.6" fill="#000" stroke="#000" stroke-width="0.15" opacity="0.85" text-anchor="end">0 A</text>
<text x="1746" y="910.8" font-size="13.6" fill="#7a2ea6" stroke="#7a2ea6" stroke-width="0.3" text-anchor="end">0 A</text>
<text x="1746.7" y="934.5" font-size="13.6" fill="#000" stroke="#000" stroke-width="0.15" opacity="0.85" text-anchor="end">-126.346 A</text>
<text x="1746" y="933.8" font-size="13.6" fill="#7a2ea6" stroke="#7a2ea6" stroke-width="0.3" text-anchor="end">-126.346 A</text>
<text x="1746.7" y="957.5" font-size="13.6" fill="#000" stroke="#000" stroke-width="0.15" opacity="0.85" text-anchor="end">-252.693 A</text>
<text x="1746" y="956.8" font-size="13.6" fill="#7a2ea6" stroke="#7a2ea6" stroke-width="0.3" text-anchor="end">-252.693 A</text>
<text x="1746.7" y="980.5" font-size="13.6" fill="#000" stroke="#000" stroke-width="0.15" opacity="0.85" text-anchor="end">-379.039 A</text>
<text x="1746" y="979.8" font-size="13.6" fill="#7a2ea6" stroke="#7a2ea6" stroke-width="0.3" text-anchor="end">-379.039 A</text>
<text x="1746.7" y="706.2" font-size="14" fill="#000" stroke="#000" stroke-width="0.15" opacity="0.85" text-anchor="end">3 V</text>
<text x="1746" y="705.5" font-size="14" fill="#2a2ac0" stroke="#2a2ac0" stroke-width="0.3" text-anchor="end">3 V</text>
<path d="M1730 700.4L1742 690.4V699.2H1751V701.7H1742V710.2Z" fill="#2626c4"/>
<path d="M1710 64.5H1743Q1746 64.5 1746 67.5V98.5Z" fill="#4a4a4a" stroke="#1e1e1e" stroke-width="1.5" stroke-linejoin="round"/>
<circle cx="1736.9" cy="71.8" r="3.9" fill="none" stroke="#b0b0b0" stroke-width="1.7"/>
<line x1="1734" y1="74.8" x2="1728.3" y2="80.6" stroke="#b0b0b0" stroke-width="2.6" stroke-linecap="round"/>
<text x="56.0" y="753" font-size="13.6" fill="#2a2a2a" text-anchor="middle" stroke="#2a2a2a" stroke-width="0.15" >0 s</text>
<text x="230.9" y="753" font-size="13.6" fill="#2a2a2a" text-anchor="middle" stroke="#2a2a2a" stroke-width="0.15" >4 ms</text>
<text x="405.8" y="753" font-size="13.6" fill="#2a2a2a" text-anchor="middle" stroke="#2a2a2a" stroke-width="0.15" >8 ms</text>
<text x="580.7" y="753" font-size="13.6" fill="#2a2a2a" text-anchor="middle" stroke="#2a2a2a" stroke-width="0.15" >12 ms</text>
<text x="755.6" y="753" font-size="13.6" fill="#2a2a2a" text-anchor="middle" stroke="#2a2a2a" stroke-width="0.15" >16 ms</text>
<text x="930.5" y="753" font-size="13.6" fill="#2a2a2a" text-anchor="middle" stroke="#2a2a2a" stroke-width="0.15" >20 ms</text>
<text x="1105.4" y="753" font-size="13.6" fill="#2a2a2a" text-anchor="middle" stroke="#2a2a2a" stroke-width="0.15" >24 ms</text>
<text x="1280.3" y="753" font-size="13.6" fill="#2a2a2a" text-anchor="middle" stroke="#2a2a2a" stroke-width="0.15" >28 ms</text>
<text x="1455.2" y="753" font-size="13.6" fill="#2a2a2a" text-anchor="middle" stroke="#2a2a2a" stroke-width="0.15" >32 ms</text>
<text x="1630.1" y="753" font-size="13.6" fill="#2a2a2a" text-anchor="middle" stroke="#2a2a2a" stroke-width="0.15" >36 ms</text>
<circle cx="1762" cy="504" r="2.3" fill="#bdbdbd"/>
<circle cx="1762" cy="512" r="2.3" fill="#bdbdbd"/>
<circle cx="1762" cy="520" r="2.3" fill="#bdbdbd"/>
<path d="M1920 29.5H1769.5V995.5H1920" fill="none" stroke="#5f5852" stroke-width="1"/>
<text x="1845" y="44" font-size="15.5" fill="#dedede" text-anchor="middle" font-weight="bold" letter-spacing="0.5">Add New...</text>
<rect x="1778.5" y="54.5" width="62.5" height="35.5" rx="6" fill="url(#gbtn)" stroke="#6e6660" stroke-width="1.2"/>
<rect x="1850.5" y="54.5" width="62.5" height="35.5" rx="6" fill="url(#gbtn)" stroke="#6e6660" stroke-width="1.2"/>
<rect x="1778.5" y="100.5" width="62.5" height="36.0" rx="6" fill="url(#gbtn)" stroke="#6e6660" stroke-width="1.2"/>
<rect x="1850.5" y="100.5" width="62.5" height="36.0" rx="6" fill="url(#gbtn)" stroke="#6e6660" stroke-width="1.2"/>
<rect x="1778.5" y="146.5" width="62.5" height="36.0" rx="6" fill="url(#gbtn)" stroke="#6e6660" stroke-width="1.2"/>
<rect x="1850.5" y="146.5" width="62.5" height="36.0" rx="6" fill="url(#gbtn)" stroke="#6e6660" stroke-width="1.2"/>
<rect x="1778.5" y="196.5" width="62.5" height="36.0" rx="6" fill="url(#gbtn)" stroke="#6e6660" stroke-width="1.2"/>
<rect x="1850.5" y="196.5" width="62.5" height="36.0" rx="6" fill="url(#gbtn)" stroke="#6e6660" stroke-width="1.2"/>
<text x="1809.75" y="76.85" font-size="14.8" fill="#ececec" text-anchor="middle" stroke="#ececec" stroke-width="0.15" >Cursors</text>
<text x="1881.75" y="76.85" font-size="14.8" fill="#ececec" text-anchor="middle" stroke="#ececec" stroke-width="0.15" >Callout</text>
<text x="1809.75" y="123.1" font-size="14.8" fill="#ececec" text-anchor="middle" stroke="#ececec" stroke-width="0.15" >Measure</text>
<text x="1881.75" y="123.1" font-size="14.8" fill="#ececec" text-anchor="middle" stroke="#ececec" stroke-width="0.15" >Search</text>
<text x="1809.75" y="161.5" font-size="14.8" fill="#ececec" text-anchor="middle" stroke="#ececec" stroke-width="0.15" >Results</text>
<text x="1809.75" y="176.7" font-size="14.8" fill="#ececec" text-anchor="middle" stroke="#ececec" stroke-width="0.15" >Table</text>
<text x="1881.75" y="169.1" font-size="14.8" fill="#ececec" text-anchor="middle" stroke="#ececec" stroke-width="0.15" >Plot</text>
<text x="1881.75" y="219.1" font-size="14.8" fill="#ececec" text-anchor="middle" stroke="#ececec" stroke-width="0.15" >More...</text>
<line x1="1773" y1="189.7" x2="1917" y2="189.7" stroke="#5e5650" stroke-width="1"/>
<line x1="1773" y1="241.5" x2="1917" y2="241.5" stroke="#5e5650" stroke-width="1"/>
<rect x="1798" y="202.5" width="22" height="19" fill="none" stroke="#bdbdbd" stroke-width="1.8" stroke-dasharray="2.5 2.5"/>
<circle cx="1810" cy="210.5" r="5" fill="none" stroke="#bdbdbd" stroke-width="1.7"/>
<line x1="1806.5" y1="214" x2="1802" y2="218.5" stroke="#bdbdbd" stroke-width="2.4" stroke-linecap="round"/>
<path d="M1815.5 217L1823 222.5L1820 223L1821.5 226L1820 226.8L1818.5 223.8L1816 225.5Z" fill="#bdbdbd"/>
<path d="M3 989.3Q3 984.3 8 984.3H88Q93 984.3 93 989.3V1073.5Q93 1078.5 88 1078.5H8Q3 1078.5 3 1073.5Z" fill="#c8c8c8"/>
<path d="M3 989.3Q3 984.3 8 984.3H88Q93 984.3 93 989.3V1003H3Z" fill="#1e1e1e"/>
<rect x="3" y="1003" width="90" height="1.5" fill="#adadad"/>
<rect x="3" y="1004.5" width="90" height="16.8" fill="#ff0000"/>
<path d="M10.5 1007.2L17 1020L4 1020Z" fill="#f2e600" stroke="#3a3070" stroke-width="1" stroke-linejoin="round"/>
<rect x="10" y="1011" width="1.2" height="7" fill="#8a8030"/>
<text x="19" y="1017.6" font-size="15.5" fill="#ffffff" stroke="#ffffff" stroke-width="0.35" >Clipping</text>
<text x="8.5" y="997.8" font-size="14.5" fill="#ece23a" stroke="#ece23a" stroke-width="0.35" >Ch 1</text>
<text x="8.5" y="1036.8" font-size="14.7" fill="#111" stroke="#111" stroke-width="0.35" >5 V/div</text>
<text x="8.5" y="1055.6" font-size="14.7" fill="#111" stroke="#111" stroke-width="0.35" >1 MΩ</text>
<text x="8.5" y="1074.6" font-size="14.7" fill="#111" stroke="#111" stroke-width="0.35" >200 kHz</text>
<text x="75" y="1071" font-size="10" fill="#111" stroke="#111" stroke-width="0.35" >B</text>
<text x="81.5" y="1075" font-size="9" fill="#111" stroke="#111" stroke-width="0.35" >w</text>
<path d="M98 989.3Q98 984.3 103 984.3H183Q188 984.3 188 989.3V1073.5Q188 1078.5 183 1078.5H103Q98 1078.5 98 1073.5Z" fill="#c8c8c8"/>
<path d="M98 989.3Q98 984.3 103 984.3H183Q188 984.3 188 989.3V1003H98Z" fill="#1e4245"/>
<rect x="98" y="1003" width="90" height="1.5" fill="#adadad"/>
<rect x="98" y="1004.5" width="90" height="16.8" fill="#ff0000"/>
<path d="M105.5 1007.2L112 1020L99 1020Z" fill="#f2e600" stroke="#3a3070" stroke-width="1" stroke-linejoin="round"/>
<rect x="105" y="1011" width="1.2" height="7" fill="#8a8030"/>
<text x="114" y="1017.6" font-size="15.5" fill="#ffffff" stroke="#ffffff" stroke-width="0.35" >Clipping</text>
<text x="103.5" y="997.8" font-size="14.5" fill="#2fcfd6" stroke="#2fcfd6" stroke-width="0.35" >Ch 2</text>
<text x="103.5" y="1036.8" font-size="14.7" fill="#111" stroke="#111" stroke-width="0.35" >250 mV/div</text>
<text x="103.5" y="1055.6" font-size="14.7" fill="#111" stroke="#111" stroke-width="0.35" >1 MΩ</text>
<text x="103.5" y="1074.6" font-size="14.7" fill="#111" stroke="#111" stroke-width="0.35" >200 kHz</text>
<text x="170" y="1071" font-size="10" fill="#111" stroke="#111" stroke-width="0.35" >B</text>
<text x="176.5" y="1075" font-size="9" fill="#111" stroke="#111" stroke-width="0.35" >w</text>
<path d="M193 989.3Q193 984.3 198 984.3H278Q283 984.3 283 989.3V1073.5Q283 1078.5 278 1078.5H198Q193 1078.5 193 1073.5Z" fill="#c8c8c8"/>
<path d="M193 989.3Q193 984.3 198 984.3H278Q283 984.3 283 989.3V1003H193Z" fill="#4a2428"/>
<rect x="193" y="1003" width="90" height="1.5" fill="#adadad"/>
<rect x="193" y="1004.5" width="90" height="16.8" fill="#ff0000"/>
<path d="M200.5 1007.2L207 1020L194 1020Z" fill="#f2e600" stroke="#3a3070" stroke-width="1" stroke-linejoin="round"/>
<rect x="200" y="1011" width="1.2" height="7" fill="#8a8030"/>
<text x="209" y="1017.6" font-size="15.5" fill="#ffffff" stroke="#ffffff" stroke-width="0.35" >Clipping</text>
<text x="198.5" y="997.8" font-size="14.5" fill="#f4f4f4" stroke="#f4f4f4" stroke-width="0.35" >Ch 3</text>
<text x="198.5" y="1036.8" font-size="14.7" fill="#111" stroke="#111" stroke-width="0.35" >450 mV/div</text>
<text x="198.5" y="1055.6" font-size="14.7" fill="#111" stroke="#111" stroke-width="0.35" >1 MΩ</text>
<text x="198.5" y="1074.6" font-size="14.7" fill="#111" stroke="#111" stroke-width="0.35" >200 kHz</text>
<text x="265" y="1071" font-size="10" fill="#111" stroke="#111" stroke-width="0.35" >B</text>
<text x="271.5" y="1075" font-size="9" fill="#111" stroke="#111" stroke-width="0.35" >w</text>
<path d="M288 1008Q288 1003 293 1003H373Q378 1003 378 1008V1073.5Q378 1078.5 373 1078.5H293Q288 1078.5 288 1073.5Z" fill="#c8c8c8"/>
<path d="M288 1008Q288 1003 293 1003H373Q378 1003 378 1008V1021.5H288Z" fill="#384223"/>
<rect x="288" y="1021.5" width="90" height="1" fill="#a8a8a8"/>
<text x="293.5" y="1016.8" font-size="14.5" fill="#8fd63e" stroke="#8fd63e" stroke-width="0.35" >Ch 4</text>
<text x="293.5" y="1036.8" font-size="14.7" fill="#111" stroke="#111" stroke-width="0.35" >200 mV/div</text>
<text x="293.5" y="1055.6" font-size="14.7" fill="#111" stroke="#111" stroke-width="0.35" >1 MΩ</text>
<text x="293.5" y="1074.6" font-size="14.7" fill="#111" stroke="#111" stroke-width="0.35" >200 kHz</text>
<text x="360" y="1071" font-size="10" fill="#111" stroke="#111" stroke-width="0.35" >B</text>
<text x="366.5" y="1075" font-size="9" fill="#111" stroke="#111" stroke-width="0.35" >w</text>
<path d="M383 1008Q383 1003 388 1003H468Q473 1003 473 1008V1073.5Q473 1078.5 468 1078.5H388Q383 1078.5 383 1073.5Z" fill="#c8c8c8"/>
<path d="M383 1008Q383 1003 388 1003H468Q473 1003 473 1008V1021.5H383Z" fill="#4a3520"/>
<rect x="383" y="1021.5" width="90" height="1" fill="#a8a8a8"/>
<text x="388.5" y="1016.8" font-size="14.5" fill="#f3a038" stroke="#f3a038" stroke-width="0.35" >Ch 5</text>
<text x="388.5" y="1036.8" font-size="14.7" fill="#111" stroke="#111" stroke-width="0.35" >1 V/div</text>
<text x="388.5" y="1055.6" font-size="14.7" fill="#111" stroke="#111" stroke-width="0.35" >1 MΩ</text>
<text x="388.5" y="1074.6" font-size="14.7" fill="#111" stroke="#111" stroke-width="0.35" >200 kHz</text>
<text x="455" y="1071" font-size="10" fill="#111" stroke="#111" stroke-width="0.35" >B</text>
<text x="461.5" y="1075" font-size="9" fill="#111" stroke="#111" stroke-width="0.35" >w</text>
<path d="M478 989.3Q478 984.3 483 984.3H563Q568 984.3 568 989.3V1073.5Q568 1078.5 563 1078.5H483Q478 1078.5 478 1073.5Z" fill="#c8c8c8"/>
<path d="M478 989.3Q478 984.3 483 984.3H563Q568 984.3 568 989.3V1003H478Z" fill="#2b2bc8"/>
<rect x="478" y="1003" width="90" height="1.5" fill="#adadad"/>
<rect x="478" y="1004.5" width="90" height="16.8" fill="#ff0000"/>
<path d="M485.5 1007.2L492 1020L479 1020Z" fill="#f2e600" stroke="#3a3070" stroke-width="1" stroke-linejoin="round"/>
<rect x="485" y="1011" width="1.2" height="7" fill="#8a8030"/>
<text x="494" y="1017.6" font-size="15.5" fill="#ffffff" stroke="#ffffff" stroke-width="0.35" >Clipping</text>
<text x="483.5" y="997.8" font-size="14.5" fill="#ffffff" stroke="#ffffff" stroke-width="0.35" >Ch 6</text>
<text x="483.5" y="1036.8" font-size="14.7" fill="#111" stroke="#111" stroke-width="0.35" >750 mV/div</text>
<text x="483.5" y="1055.6" font-size="14.7" fill="#111" stroke="#111" stroke-width="0.35" >1 MΩ</text>
<text x="483.5" y="1074.6" font-size="14.7" fill="#111" stroke="#111" stroke-width="0.35" >200 kHz</text>
<text x="550" y="1071" font-size="10" fill="#111" stroke="#111" stroke-width="0.35" >B</text>
<text x="556.5" y="1075" font-size="9" fill="#111" stroke="#111" stroke-width="0.35" >w</text>
<path d="M573 1008Q573 1003 578 1003H658Q663 1003 663 1008V1073.5Q663 1078.5 658 1078.5H578Q573 1078.5 573 1073.5Z" fill="#c8c8c8"/>
<path d="M573 1008Q573 1003 578 1003H658Q663 1003 663 1008V1021.5H573Z" fill="#4a3520"/>
<rect x="573" y="1021.5" width="90" height="1" fill="#a8a8a8"/>
<text x="578.5" y="1016.8" font-size="14.5" fill="#f3a038" stroke="#f3a038" stroke-width="0.35" >Math 1</text>
<text x="578.5" y="1036.8" font-size="14.7" fill="#111" font-weight="bold" >72.5 mT/div</text>
<text x="578.5" y="1055.6" font-size="14.7" fill="#111" stroke="#111" stroke-width="0.35" >Intg(Ch2)...</text>
<text x="578.5" y="1074.6" font-size="14.7" fill="#111" stroke="#111" stroke-width="0.35" ></text>
<path d="M668 1008Q668 1003 673 1003H753Q758 1003 758 1008V1073.5Q758 1078.5 753 1078.5H673Q668 1078.5 668 1073.5Z" fill="#c8c8c8"/>
<path d="M668 1008Q668 1003 673 1003H753Q758 1003 758 1008V1021.5H668Z" fill="#2d2434"/>
<rect x="668" y="1021.5" width="90" height="1" fill="#a8a8a8"/>
<text x="673.5" y="1016.8" font-size="14.5" fill="#f4f4f4" stroke="#f4f4f4" stroke-width="0.35" >Math 2</text>
<text x="673.5" y="1036.8" font-size="14.7" fill="#111" font-weight="bold" >63.173 A/...</text>
<text x="673.5" y="1055.6" font-size="14.7" fill="#111" stroke="#111" stroke-width="0.35" >-Intg(Ch3...</text>
<text x="673.5" y="1074.6" font-size="14.7" fill="#111" stroke="#111" stroke-width="0.35" ></text>
<rect x="1129.5" y="999.5" width="39" height="78.5" rx="6" fill="url(#gbtn2)" stroke="#6e6660" stroke-width="1.2"/>
<rect x="1133.5" y="1007" width="31" height="2" fill="#c01818"/>
<text x="1149.0" y="1033.0" font-size="15" fill="#f0f0f0" text-anchor="middle" stroke="#f0f0f0" stroke-width="0.35" >Add</text>
<text x="1149.0" y="1049.3" font-size="15" fill="#f0f0f0" text-anchor="middle" stroke="#f0f0f0" stroke-width="0.35" >New</text>
<text x="1149.0" y="1065.6" font-size="15" fill="#f0f0f0" text-anchor="middle" stroke="#f0f0f0" stroke-width="0.35" >Math</text>
<rect x="1174.5" y="999.5" width="39" height="78.5" rx="6" fill="url(#gbtn2)" stroke="#6e6660" stroke-width="1.2"/>
<rect x="1178.5" y="1007" width="31" height="2" fill="#c8c8e0"/>
<text x="1194.0" y="1033.0" font-size="15" fill="#f0f0f0" text-anchor="middle" stroke="#f0f0f0" stroke-width="0.35" >Add</text>
<text x="1194.0" y="1049.3" font-size="15" fill="#f0f0f0" text-anchor="middle" stroke="#f0f0f0" stroke-width="0.35" >New</text>
<text x="1194.0" y="1065.6" font-size="15" fill="#f0f0f0" text-anchor="middle" stroke="#f0f0f0" stroke-width="0.35" >Ref</text>
<rect x="1219.5" y="999.5" width="39" height="78.5" rx="6" fill="url(#gbtn2)" stroke="#6e6660" stroke-width="1.2"/>
<rect x="1223.5" y="1007" width="31" height="2" fill="#b040f0"/>
<text x="1239.0" y="1033.0" font-size="15" fill="#f0f0f0" text-anchor="middle" stroke="#f0f0f0" stroke-width="0.35" >Add</text>
<text x="1239.0" y="1049.3" font-size="15" fill="#f0f0f0" text-anchor="middle" stroke="#f0f0f0" stroke-width="0.35" >New</text>
<text x="1239.0" y="1065.6" font-size="15" fill="#f0f0f0" text-anchor="middle" stroke="#f0f0f0" stroke-width="0.35" >Bus</text>
<rect x="1269" y="1001" width="1" height="76" fill="#5e5650"/>
<rect x="1118" y="1000" width="1" height="77.7" fill="#655d57"/>
<rect x="1811" y="1001" width="1" height="76" fill="#5e5650"/>
<rect x="1280.5" y="1003.5" width="199" height="74.59999999999991" rx="4.5" fill="#151515"/>
<rect x="1281" y="1004" width="198" height="73.59999999999991" rx="4" fill="#c8c8c8"/>
<path d="M1281 1008Q1281 1004 1285 1004H1475Q1479 1004 1479 1008V1022.4H1281Z" fill="#5a5a5c"/>
<rect x="1281" y="1022.4" width="198" height="1.6" fill="#a4a4a4"/>
<text x="1286.5" y="1018" font-size="16" fill="#f4f4f4" stroke="#f4f4f4" stroke-width="0.15" >Horizontal</text>
<text x="1286" y="1037" font-size="14.8" fill="#111" stroke="#111" stroke-width="0.2" letter-spacing="-0.15">4 ms/div</text>
<text x="1286" y="1056.2" font-size="14.8" fill="#111" stroke="#111" stroke-width="0.2" letter-spacing="-0.15">SR: 1 MS/s</text>
<text x="1286" y="1075" font-size="14.8" fill="#111" stroke="#111" stroke-width="0.2" letter-spacing="-0.15">RL: 40 kpts</text>
<text x="1391" y="1037" font-size="14.8" fill="#111" stroke="#111" stroke-width="0.2" letter-spacing="-0.15">40 ms</text>
<text x="1391" y="1056.2" font-size="14.8" fill="#111" stroke="#111" stroke-width="0.2" letter-spacing="-0.15">1 µs/pt</text>
<text x="1405.5" y="1075" font-size="14.8" fill="#111" stroke="#111" stroke-width="0.2" letter-spacing="-0.15">3%</text>
<path d="M1391.8 1063.6H1399.4V1072.2H1397L1395.6 1074.6L1394.2 1072.2H1391.8Z" fill="#000" stroke="#f58a1f" stroke-width="1.2"/>
<path d="M1393.6 1066H1397.6M1395.6 1066V1070.5" stroke="#fff" stroke-width="1.4"/>
<rect x="1485.5" y="1003.5" width="159" height="74.59999999999991" rx="4.5" fill="#151515"/>
<rect x="1486" y="1004" width="158" height="73.59999999999991" rx="4" fill="#c8c8c8"/>
<path d="M1486 1008Q1486 1004 1490 1004H1640Q1644 1004 1644 1008V1022.4H1486Z" fill="#5a5a5c"/>
<rect x="1486" y="1022.4" width="158" height="1.6" fill="#a4a4a4"/>
<text x="1491.5" y="1018" font-size="16" fill="#f4f4f4" stroke="#f4f4f4" stroke-width="0.15" >Trigger</text>
<rect x="1490.5" y="1025.5" width="29" height="15" rx="4" fill="#2323c4" stroke="#111" stroke-width="1"/>
<text x="1505" y="1038" font-size="14.5" fill="#ffffff" text-anchor="middle" stroke="#ffffff" stroke-width="0.35" >6</text>
<path d="M1530 1037.5H1534L1541.5 1027.5H1546" fill="none" stroke="#2a2a80" stroke-width="1.2"/>
<text x="1556.8" y="1037.2" font-size="15" fill="#111" stroke="#111" stroke-width="0.15" >3 V</text>
<rect x="1650.5" y="1003.5" width="149" height="74.59999999999991" rx="4.5" fill="#151515"/>
<rect x="1651" y="1004" width="148" height="73.59999999999991" rx="4" fill="#c8c8c8"/>
<path d="M1651 1008Q1651 1004 1655 1004H1795Q1799 1004 1799 1008V1022.4H1651Z" fill="#5a5a5c"/>
<rect x="1651" y="1022.4" width="148" height="1.6" fill="#a4a4a4"/>
<text x="1656.5" y="1018" font-size="16" fill="#f4f4f4" stroke="#f4f4f4" stroke-width="0.15" >Acquisition</text>
<text x="1655" y="1037" font-size="14.8" fill="#111" stroke="#111" stroke-width="0.2" letter-spacing="-0.15">Manual,</text>
<text x="1736" y="1037" font-size="14.8" fill="#111" stroke="#111" stroke-width="0.2" letter-spacing="-0.15">Analyze</text>
<text x="1655" y="1056.2" font-size="14.8" fill="#111" stroke="#111" stroke-width="0.2" letter-spacing="-0.15">High Res: 16 bits</text>
<text x="1655" y="1075" font-size="14.8" fill="#111" stroke="#111" stroke-width="0.2" letter-spacing="-0.15">Single: 1 /1</text>
<rect x="1823" y="1000" width="88.5" height="34.5" rx="5" fill="#f41c1c" stroke="#3a3a3a" stroke-width="1"/>
<text x="1867" y="1020.5" font-size="14.5" fill="#ffffff" text-anchor="middle" font-weight="bold" >Stopped</text>
<rect x="1823" y="1041" width="88.5" height="36.8" rx="4" fill="#c8c8c8"/>
<text x="1867" y="1055.5" font-size="15" fill="#111" text-anchor="middle" stroke="#111" stroke-width="0.35" letter-spacing="-0.1">30 Apr 2025</text>
<text x="1867" y="1072.6" font-size="15" fill="#111" text-anchor="middle" stroke="#111" stroke-width="0.35" letter-spacing="-0.3">12:36:13 PM</text>
</svg>
</body></html>
